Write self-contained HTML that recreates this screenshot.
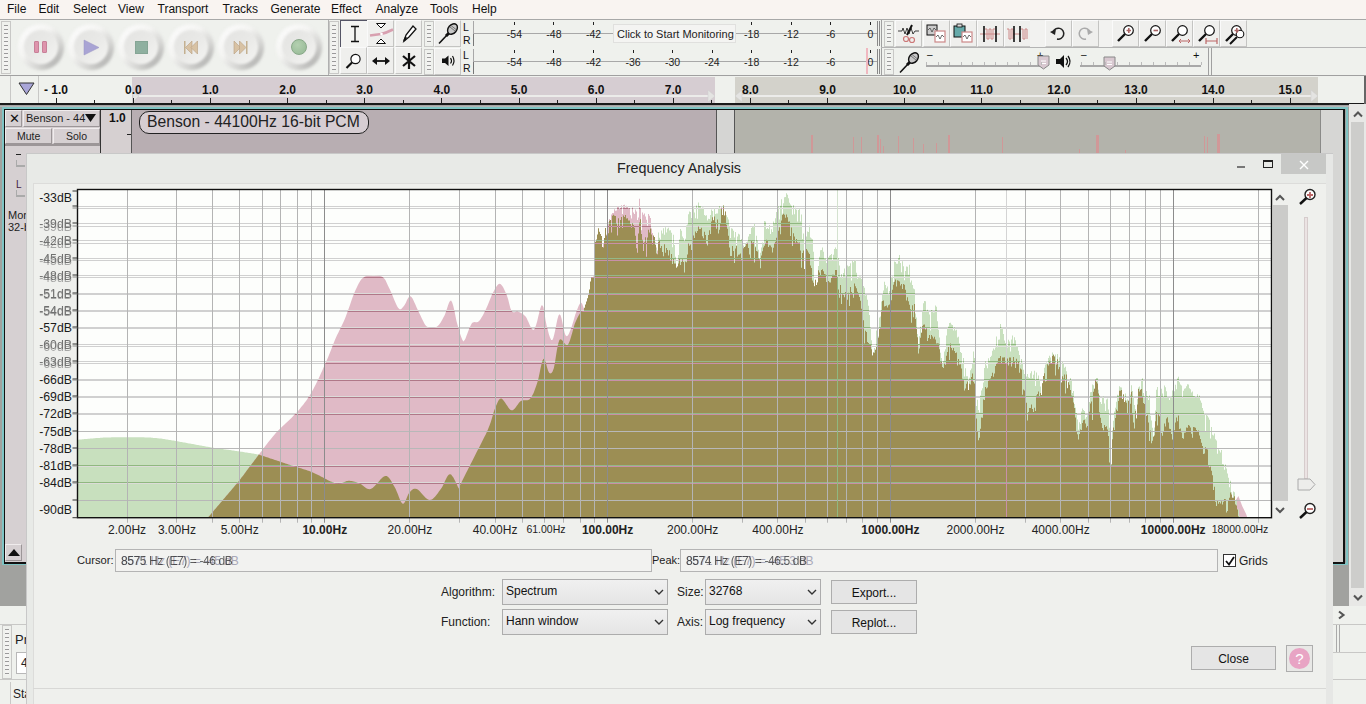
<!DOCTYPE html>
<html><head><meta charset="utf-8"><title>Audacity</title>
<style>
*{box-sizing:border-box;margin:0;padding:0}
html,body{width:1366px;height:704px;overflow:hidden;background:#eff1ed;font-family:"Liberation Sans",sans-serif;font-size:12px;color:#111}
.a{position:absolute}
.t{position:absolute;white-space:nowrap;line-height:1}
.grip{position:absolute;width:10px;background:repeating-linear-gradient(to bottom,#f4f4f2 0,#f4f4f2 3px,#9a9a9a 3px,#9a9a9a 4px);border:1px solid #c8c8c6;background-clip:content-box;padding:3px 2px}
.btn{position:absolute;background:#efefed;border:1px solid #fafafa;border-right-color:#c4c4c2;border-bottom-color:#c4c4c2}
svg{position:absolute;overflow:visible}
</style></head><body>

<div class="a" style="left:0;top:0;width:1366px;height:19px;background:#f9f4f1"></div>
<div class="t" style="left:7px;top:3px;font-size:12px;color:#111">File</div>
<div class="t" style="left:38.5px;top:3px;font-size:12px;color:#111">Edit</div>
<div class="t" style="left:73px;top:3px;font-size:12px;color:#111">Select</div>
<div class="t" style="left:118px;top:3px;font-size:12px;color:#111">View</div>
<div class="t" style="left:157.5px;top:3px;font-size:12px;color:#111">Transport</div>
<div class="t" style="left:222.5px;top:3px;font-size:12px;color:#111">Tracks</div>
<div class="t" style="left:270.5px;top:3px;font-size:12px;color:#111">Generate</div>
<div class="t" style="left:331px;top:3px;font-size:12px;color:#111">Effect</div>
<div class="t" style="left:375.5px;top:3px;font-size:12px;color:#111">Analyze</div>
<div class="t" style="left:430px;top:3px;font-size:12px;color:#111">Tools</div>
<div class="t" style="left:472px;top:3px;font-size:12px;color:#111">Help</div>
<div class="a" style="left:0;top:19px;width:1366px;height:57px;background:#eff1ed;border-top:1px solid #a8a8a8"></div>
<div class="a" style="left:0;top:75px;width:1366px;height:1px;background:#a0a0a0"></div>
<div class="a" style="left:0;top:20px;width:329px;height:55px;border-right:1px solid #b0b0b0;background:#eff1ed"></div>
<div class="grip" style="left:1px;top:21px;height:53px"></div>
<div class="a" style="left:18px;top:24px;width:46px;height:46px;border-radius:50%;background:linear-gradient(135deg,#fcfcfc 5%,#f4f4f2 40%,#d4d4d2 68%,#a6a6a4 92%);filter:blur(1.4px)"></div>
<div class="a" style="left:24px;top:30px;width:34px;height:34px;border-radius:50%;background:linear-gradient(135deg,#e3e3e1 0%,#e9e9e7 50%,#f5f5f3 100%);filter:blur(0.8px)"></div>
<div class="a" style="left:34px;top:41px;width:5px;height:12px;background:#de94ac;border-radius:1px;border:1px solid #c88098"></div><div class="a" style="left:42px;top:41px;width:5px;height:12px;background:#de94ac;border-radius:1px;border:1px solid #c88098"></div>
<div class="a" style="left:68px;top:24px;width:46px;height:46px;border-radius:50%;background:linear-gradient(135deg,#fcfcfc 5%,#f4f4f2 40%,#d4d4d2 68%,#a6a6a4 92%);filter:blur(1.4px)"></div>
<div class="a" style="left:74px;top:30px;width:34px;height:34px;border-radius:50%;background:linear-gradient(135deg,#e3e3e1 0%,#e9e9e7 50%,#f5f5f3 100%);filter:blur(0.8px)"></div>
<svg style="left:84px;top:40px" width="16" height="16"><polygon points="0,0 15,7.5 0,15" fill="#a9a4d4" stroke="#9a95c4" stroke-width="0.5"/></svg>
<div class="a" style="left:118px;top:24px;width:46px;height:46px;border-radius:50%;background:linear-gradient(135deg,#fcfcfc 5%,#f4f4f2 40%,#d4d4d2 68%,#a6a6a4 92%);filter:blur(1.4px)"></div>
<div class="a" style="left:124px;top:30px;width:34px;height:34px;border-radius:50%;background:linear-gradient(135deg,#e3e3e1 0%,#e9e9e7 50%,#f5f5f3 100%);filter:blur(0.8px)"></div>
<div class="a" style="left:135px;top:41px;width:13px;height:13px;background:#8fb0a0;border:1px solid #85a595"></div>
<div class="a" style="left:168px;top:24px;width:46px;height:46px;border-radius:50%;background:linear-gradient(135deg,#fcfcfc 5%,#f4f4f2 40%,#d4d4d2 68%,#a6a6a4 92%);filter:blur(1.4px)"></div>
<div class="a" style="left:174px;top:30px;width:34px;height:34px;border-radius:50%;background:linear-gradient(135deg,#e3e3e1 0%,#e9e9e7 50%,#f5f5f3 100%);filter:blur(0.8px)"></div>
<svg style="left:184px;top:40px" width="16" height="16"><rect x="0" y="1" width="1.5" height="13" fill="#c4b090"/><polygon points="1.5,7.5 8,1 8,14" fill="#d8c2a4" stroke="#b8a080" stroke-width="0.6"/><polygon points="7,7.5 13.5,1 13.5,14" fill="#d8c2a4" stroke="#b8a080" stroke-width="0.6"/></svg>
<div class="a" style="left:218px;top:24px;width:46px;height:46px;border-radius:50%;background:linear-gradient(135deg,#fcfcfc 5%,#f4f4f2 40%,#d4d4d2 68%,#a6a6a4 92%);filter:blur(1.4px)"></div>
<div class="a" style="left:224px;top:30px;width:34px;height:34px;border-radius:50%;background:linear-gradient(135deg,#e3e3e1 0%,#e9e9e7 50%,#f5f5f3 100%);filter:blur(0.8px)"></div>
<svg style="left:234px;top:40px" width="16" height="16"><polygon points="0,1 6.5,7.5 0,14" fill="#d8c2a4" stroke="#b8a080" stroke-width="0.6"/><polygon points="5.5,1 12,7.5 5.5,14" fill="#d8c2a4" stroke="#b8a080" stroke-width="0.6"/><rect x="12" y="1" width="1.5" height="13" fill="#c4b090"/></svg>
<div class="a" style="left:276px;top:24px;width:46px;height:46px;border-radius:50%;background:linear-gradient(135deg,#fcfcfc 5%,#f4f4f2 40%,#d4d4d2 68%,#a6a6a4 92%);filter:blur(1.4px)"></div>
<div class="a" style="left:282px;top:30px;width:34px;height:34px;border-radius:50%;background:linear-gradient(135deg,#e3e3e1 0%,#e9e9e7 50%,#f5f5f3 100%);filter:blur(0.8px)"></div>
<div class="a" style="left:291px;top:39px;width:16px;height:16px;border-radius:50%;background:radial-gradient(circle at 40% 35%,#b4d0b0,#94b894);border:1px solid #88a888"></div>
<div class="grip" style="left:329px;top:21px;height:53px"></div>
<div class="btn" style="left:340px;top:20px;width:27px;height:27px"></div>
<div class="btn" style="left:367px;top:20px;width:27px;height:27px"></div>
<div class="btn" style="left:395px;top:20px;width:27px;height:27px"></div>
<div class="btn" style="left:340px;top:47px;width:27px;height:27px"></div>
<div class="btn" style="left:367px;top:47px;width:27px;height:27px"></div>
<div class="btn" style="left:395px;top:47px;width:27px;height:27px"></div>
<div class="a" style="left:340px;top:20px;width:27px;height:27px;border-left:1px solid #556;border-top:1px solid #556;background:#f4f4f2"></div>
<svg style="left:346px;top:24px" width="16" height="20"><path d="M5,2.5 H13 M9,2.5 V17.5 M5,17.5 H13" stroke="#111" stroke-width="1.3" fill="none"/></svg>
<svg style="left:369px;top:22px" width="24" height="24"><polygon points="7.5,1.5 16.5,1.5 12,6" fill="#fff" stroke="#111" stroke-width="1"/><polygon points="7.5,21.5 16.5,21.5 12,17" fill="#fff" stroke="#111" stroke-width="1"/><path d="M1,13.5 L12,12 Q17,11 24,7.5" stroke="#d8a0b0" stroke-width="2.6" fill="none"/><circle cx="12.5" cy="12" r="1.3" fill="#fff"/></svg>
<svg style="left:399px;top:24px" width="20" height="20"><path d="M5,17 L7,11 L14,2 L17,5 L10,13 Z" fill="#fff" stroke="#111" stroke-width="1.3"/><path d="M5,17 L7,13" stroke="#111" stroke-width="2"/></svg>
<svg style="left:344px;top:51px" width="20" height="20"><circle cx="11.5" cy="8" r="4.6" fill="#fff" stroke="#111" stroke-width="1.2"/><path d="M8,11.5 L2.5,17" stroke="#111" stroke-width="2.2"/></svg>
<svg style="left:371px;top:53px" width="20" height="16"><path d="M3,8 H17" stroke="#111" stroke-width="1.8"/><polygon points="1,8 6,4 6,12" fill="#111"/><polygon points="19,8 14,4 14,12" fill="#111"/></svg>
<svg style="left:401px;top:51px" width="16" height="20"><path d="M8,2 V18 M2,5 L14,15 M14,5 L2,15" stroke="#111" stroke-width="2.2"/></svg>
<div class="grip" style="left:424px;top:21px;height:26px"></div>
<div class="btn" style="left:434px;top:20px;width:27px;height:27px"></div>
<div class="t" style="left:463px;top:22px;font-size:10.5px">L</div><div class="t" style="left:463px;top:35px;font-size:10.5px">R</div>
<div class="a" style="left:473px;top:21px;width:405px;height:25px;border-left:1px solid #a8a8a8"></div>
<div class="a" style="left:474px;top:33px;width:404px;height:1px;background:#a8a8a8"></div>
<div class="a" style="left:473px;top:34px;width:1px;height:12px;background:#777"></div>
<div class="a" style="left:877px;top:21px;width:1px;height:25px;background:#888"></div><div class="a" style="left:879px;top:21px;width:1px;height:25px;background:#888"></div>
<div class="a" style="left:513.9px;top:22px;width:1px;height:3px;background:#222"></div>
<div class="t" style="left:494.4px;width:40px;text-align:center;top:29px;font-size:10.5px;color:#222">-54</div>
<div class="a" style="left:553.4px;top:22px;width:1px;height:3px;background:#222"></div>
<div class="t" style="left:533.9px;width:40px;text-align:center;top:29px;font-size:10.5px;color:#222">-48</div>
<div class="a" style="left:593.0px;top:22px;width:1px;height:3px;background:#222"></div>
<div class="t" style="left:573.5px;width:40px;text-align:center;top:29px;font-size:10.5px;color:#222">-42</div>
<div class="a" style="left:751.2px;top:22px;width:1px;height:3px;background:#222"></div>
<div class="t" style="left:731.7px;width:40px;text-align:center;top:29px;font-size:10.5px;color:#222">-18</div>
<div class="a" style="left:790.8px;top:22px;width:1px;height:3px;background:#222"></div>
<div class="t" style="left:771.2px;width:40px;text-align:center;top:29px;font-size:10.5px;color:#222">-12</div>
<div class="a" style="left:830.3px;top:22px;width:1px;height:3px;background:#222"></div>
<div class="t" style="left:810.8px;width:40px;text-align:center;top:29px;font-size:10.5px;color:#222">-6</div>
<div class="a" style="left:869.8px;top:22px;width:1px;height:3px;background:#222"></div>
<div class="t" style="left:850.3px;width:40px;text-align:center;top:29px;font-size:10.5px;color:#222">0</div>
<div class="grip" style="left:424px;top:49px;height:26px"></div>
<div class="btn" style="left:434px;top:48px;width:27px;height:27px"></div>
<div class="t" style="left:463px;top:50px;font-size:10.5px">L</div><div class="t" style="left:463px;top:63px;font-size:10.5px">R</div>
<div class="a" style="left:473px;top:49px;width:405px;height:25px;border-left:1px solid #a8a8a8"></div>
<div class="a" style="left:474px;top:61px;width:404px;height:1px;background:#a8a8a8"></div>
<div class="a" style="left:473px;top:62px;width:1px;height:12px;background:#777"></div>
<div class="a" style="left:877px;top:49px;width:1px;height:25px;background:#888"></div><div class="a" style="left:879px;top:49px;width:1px;height:25px;background:#888"></div>
<div class="a" style="left:513.9px;top:50px;width:1px;height:3px;background:#222"></div>
<div class="t" style="left:494.4px;width:40px;text-align:center;top:57px;font-size:10.5px;color:#222">-54</div>
<div class="a" style="left:553.4px;top:50px;width:1px;height:3px;background:#222"></div>
<div class="t" style="left:533.9px;width:40px;text-align:center;top:57px;font-size:10.5px;color:#222">-48</div>
<div class="a" style="left:593.0px;top:50px;width:1px;height:3px;background:#222"></div>
<div class="t" style="left:573.5px;width:40px;text-align:center;top:57px;font-size:10.5px;color:#222">-42</div>
<div class="a" style="left:632.5px;top:50px;width:1px;height:3px;background:#222"></div>
<div class="t" style="left:613.0px;width:40px;text-align:center;top:57px;font-size:10.5px;color:#222">-36</div>
<div class="a" style="left:672.1px;top:50px;width:1px;height:3px;background:#222"></div>
<div class="t" style="left:652.6px;width:40px;text-align:center;top:57px;font-size:10.5px;color:#222">-30</div>
<div class="a" style="left:711.6px;top:50px;width:1px;height:3px;background:#222"></div>
<div class="t" style="left:692.1px;width:40px;text-align:center;top:57px;font-size:10.5px;color:#222">-24</div>
<div class="a" style="left:751.2px;top:50px;width:1px;height:3px;background:#222"></div>
<div class="t" style="left:731.7px;width:40px;text-align:center;top:57px;font-size:10.5px;color:#222">-18</div>
<div class="a" style="left:790.8px;top:50px;width:1px;height:3px;background:#222"></div>
<div class="t" style="left:771.2px;width:40px;text-align:center;top:57px;font-size:10.5px;color:#222">-12</div>
<div class="a" style="left:830.3px;top:50px;width:1px;height:3px;background:#222"></div>
<div class="t" style="left:810.8px;width:40px;text-align:center;top:57px;font-size:10.5px;color:#222">-6</div>
<div class="a" style="left:869.8px;top:50px;width:1px;height:3px;background:#222"></div>
<div class="t" style="left:850.3px;width:40px;text-align:center;top:57px;font-size:10.5px;color:#222">0</div>
<div class="a" style="left:613px;top:24px;width:123px;height:19px;background:#f4f4f2;border:1px solid #e0e0de"></div>
<div class="t" style="left:617px;top:29px;font-size:11px;color:#222">Click to Start Monitoring</div>
<div class="a" style="left:866px;top:48px;width:2px;height:26px;background:#f0b8c0"></div>
<svg style="left:437px;top:22px" width="22" height="24"><path d="M2,21.5 L11,12" stroke="#111" stroke-width="1.6"/><path d="M9,14 L13,10" stroke="#111" stroke-width="3"/><ellipse cx="15.5" cy="7" rx="4.2" ry="5.8" transform="rotate(40 15.5 7)" fill="#c8c8c8" stroke="#111" stroke-width="1.4"/><path d="M13,5 L18,9 M14,3.5 L19,7.5" stroke="#555" stroke-width="0.7"/></svg>
<svg style="left:441px;top:53px" width="16" height="16"><polygon points="1,5.5 4,5.5 7.5,2.5 7.5,13 4,10 1,10" fill="#111"/><path d="M9.5,5 Q11.5,7.8 9.5,10.5 M11.5,3 Q14.5,7.8 11.5,12.5" stroke="#111" stroke-width="1.2" fill="none"/></svg>
<div class="a" style="left:881px;top:20px;width:1px;height:55px;background:#a0a0a0"></div>
<div class="grip" style="left:884px;top:21px;height:26px"></div>
<div class="btn" style="left:895px;top:20px;width:27px;height:27px"></div>
<div class="btn" style="left:923px;top:20px;width:27px;height:27px"></div>
<div class="btn" style="left:950px;top:20px;width:27px;height:27px"></div>
<div class="btn" style="left:977px;top:20px;width:27px;height:27px"></div>
<div class="btn" style="left:1004px;top:20px;width:27px;height:27px"></div>
<div class="btn" style="left:1045px;top:20px;width:27px;height:27px"></div>
<div class="btn" style="left:1072px;top:20px;width:27px;height:27px"></div>
<div class="btn" style="left:1112px;top:20px;width:27px;height:27px"></div>
<div class="btn" style="left:1139px;top:20px;width:27px;height:27px"></div>
<div class="btn" style="left:1166px;top:20px;width:27px;height:27px"></div>
<div class="btn" style="left:1193px;top:20px;width:27px;height:27px"></div>
<div class="btn" style="left:1220px;top:20px;width:27px;height:27px"></div>
<div class="a" style="left:1030px;top:20px;width:15px;height:27px;background:#f2f2f0"></div>
<div class="a" style="left:1099px;top:20px;width:13px;height:27px;background:#f2f2f0"></div>
<div class="a" style="left:1248px;top:20px;width:118px;height:27px;background:#eff1ed"></div>
<svg style="left:897px;top:22px" width="24" height="24"><path d="M1,9 L5,9 L6,6 L8,12 L10,6 L12,12 L14,6 L16,12 L18,9 L22,9" stroke="#111" stroke-width="0.8" fill="none"/><path d="M15,3 L10,13" stroke="#111" stroke-width="2"/><circle cx="9" cy="17" r="2.5" fill="none" stroke="#c77" stroke-width="1.2"/><circle cx="15" cy="18" r="2.5" fill="none" stroke="#c77" stroke-width="1.2"/></svg>
<svg style="left:926px;top:24px" width="22" height="22"><rect x="1" y="1" width="10" height="10" fill="#ccc" stroke="#111"/><path d="M2,6 L4,4 L6,8 L8,4 L10,6" stroke="#333" stroke-width="0.7" fill="none"/><rect x="9" y="7" width="10" height="11" fill="#fff" stroke="#c88" stroke-width="1.2"/><path d="M10,13 L12,11 L14,15 L16,11 L18,13" stroke="#333" stroke-width="0.7" fill="none"/></svg>
<svg style="left:953px;top:23px" width="22" height="22"><rect x="1" y="3" width="11" height="11" fill="#6aa" stroke="#111"/><rect x="4" y="1" width="5" height="3" fill="#ddd" stroke="#111" stroke-width="0.8"/><rect x="9" y="9" width="10" height="10" fill="#fff" stroke="#c88" stroke-width="1.2"/><path d="M10,14 L12,12 L14,16 L16,12 L18,14" stroke="#333" stroke-width="0.7" fill="none"/></svg>
<svg style="left:979px;top:23px" width="22" height="22"><path d="M1,11 H21" stroke="#c88" stroke-width="1"/><path d="M6,6 H8 V16 H10 V6 H12 V16 H14 V6 H16" stroke="#c88" stroke-width="1" fill="none"/><path d="M5,3 V19 M17,3 V19" stroke="#111" stroke-width="1.6"/></svg>
<svg style="left:1006px;top:23px" width="22" height="22"><path d="M1,6 H3 V16 H5 V6 H7 V16" stroke="#c88" stroke-width="1" fill="none"/><path d="M15,6 H17 V16 H19 V6 H21 V16" stroke="#c88" stroke-width="1" fill="none"/><path d="M7,11 H15" stroke="#c88"/><path d="M8,3 V19 M14,3 V19" stroke="#111" stroke-width="1.6"/></svg>
<svg style="left:1049px;top:25px" width="18" height="18"><path d="M4,7 A5.5,5.5 0 1 1 8,14" stroke="#222" stroke-width="1.5" fill="none"/><polygon points="1,7 7,4 6,10" fill="#222"/></svg>
<svg style="left:1076px;top:25px" width="18" height="18"><path d="M14,7 A5.5,5.5 0 1 0 10,14" stroke="#aaa" stroke-width="1.5" fill="none"/><polygon points="17,7 11,4 12,10" fill="#aaa"/></svg>
<svg style="left:1114px;top:23px" width="24" height="22"><circle cx="14.5" cy="7.5" r="4.8" fill="#fff" stroke="#111" stroke-width="1.2"/><path d="M11,11 L4,18" stroke="#111" stroke-width="2.4"/><path d="M12.5,7.5 H17 M14.8,5 V10" stroke="#a66" stroke-width="1.6"/></svg>
<svg style="left:1141px;top:23px" width="24" height="22"><circle cx="14.5" cy="7.5" r="4.8" fill="#fff" stroke="#111" stroke-width="1.2"/><path d="M11,11 L4,18" stroke="#111" stroke-width="2.4"/><path d="M12.5,7.5 H17" stroke="#a66" stroke-width="1.6"/></svg>
<svg style="left:1168px;top:23px" width="24" height="22"><circle cx="14.5" cy="7.5" r="4.8" fill="#fff" stroke="#111" stroke-width="1.2"/><path d="M11,11 L4,18" stroke="#111" stroke-width="2.4"/><path d="M11,18 H22 M11,18 l2,-2 M11,18 l2,2 M22,18 l-2,-2 M22,18 l-2,2" stroke="#b66" stroke-width="1"/></svg>
<svg style="left:1195px;top:23px" width="24" height="22"><circle cx="14.5" cy="7.5" r="4.8" fill="#fff" stroke="#111" stroke-width="1.2"/><path d="M11,11 L4,18" stroke="#111" stroke-width="2.4"/><path d="M11,18 H22 M11,15 V21 M22,15 V21" stroke="#b66" stroke-width="1.2"/></svg>
<svg style="left:1222px;top:23px" width="24" height="22"><circle cx="14.5" cy="7.5" r="4.8" fill="#fff" stroke="#111" stroke-width="1.2"/><path d="M11,11 L4,18" stroke="#111" stroke-width="2.4"/><circle cx="18" cy="11" r="3.8" fill="#fff" stroke="#111" stroke-width="1.1"/><path d="M15,14 L8,21" stroke="#111" stroke-width="2"/><path d="M12.5,7.5 H17 M14.8,5 V10" stroke="#a66" stroke-width="1.6"/></svg>
<div class="grip" style="left:884px;top:49px;height:26px"></div>
<svg style="left:898px;top:51px" width="22" height="24"><path d="M2,21.5 L11,12" stroke="#111" stroke-width="1.6"/><path d="M9,14 L13,10" stroke="#111" stroke-width="3"/><ellipse cx="15.5" cy="7" rx="4.2" ry="5.8" transform="rotate(40 15.5 7)" fill="#c8c8c8" stroke="#111" stroke-width="1.4"/><path d="M13,5 L18,9 M14,3.5 L19,7.5" stroke="#555" stroke-width="0.7"/></svg>
<div class="a" style="left:926px;top:65px;width:115px;height:2px;background:#a8a8a8"></div>
<div class="t" style="left:927px;top:50px;font-size:10px">–</div><div class="t" style="left:1037px;top:50px;font-size:11px">+</div>
<svg style="left:1037px;top:55px" width="14" height="16"><polygon points="1,1 12,1 12,10 6.5,14 1,10" fill="#d8c8d0" stroke="#888" stroke-width="1"/><path d="M4,6 H9 M4,8.5 H9" stroke="#fff"/></svg>
<svg style="left:1055px;top:53px" width="18" height="18"><polygon points="1,6 5,6 9,2 9,15 5,11 1,11" fill="#111"/><path d="M11,5 Q14,8.5 11,12 M13,3 Q17,8.5 13,14" stroke="#111" stroke-width="1.3" fill="none"/></svg>
<div class="a" style="left:1080px;top:65px;width:121px;height:2px;background:#a8a8a8"></div>
<div class="t" style="left:1081px;top:50px;font-size:10px">–</div><div class="t" style="left:1193px;top:50px;font-size:11px">+</div>
<svg style="left:1103px;top:56px" width="14" height="16"><polygon points="1,1 12,1 12,10 6.5,14 1,10" fill="#d8c8d0" stroke="#888" stroke-width="1"/><path d="M4,6 H9 M4,8.5 H9" stroke="#fff"/></svg>
<div class="a" style="left:1208px;top:48px;width:1px;height:27px;background:#a0a0a0"></div><div class="a" style="left:1211px;top:48px;width:1px;height:27px;background:#a0a0a0"></div>
<div class="a" style="left:881px;top:47px;width:485px;height:1px;background:#b4b4b4"></div>
<div class="a" style="left:926.0px;top:62px;width:1px;height:3px;background:#bbb"></div><div class="a" style="left:937.5px;top:62px;width:1px;height:3px;background:#bbb"></div><div class="a" style="left:949.0px;top:62px;width:1px;height:3px;background:#bbb"></div><div class="a" style="left:960.5px;top:62px;width:1px;height:3px;background:#bbb"></div><div class="a" style="left:972.0px;top:62px;width:1px;height:3px;background:#bbb"></div><div class="a" style="left:983.5px;top:62px;width:1px;height:3px;background:#bbb"></div><div class="a" style="left:995.0px;top:62px;width:1px;height:3px;background:#bbb"></div><div class="a" style="left:1006.5px;top:62px;width:1px;height:3px;background:#bbb"></div><div class="a" style="left:1018.0px;top:62px;width:1px;height:3px;background:#bbb"></div><div class="a" style="left:1029.5px;top:62px;width:1px;height:3px;background:#bbb"></div><div class="a" style="left:1041.0px;top:62px;width:1px;height:3px;background:#bbb"></div>
<div class="a" style="left:1081.0px;top:62px;width:1px;height:3px;background:#bbb"></div><div class="a" style="left:1093.0px;top:62px;width:1px;height:3px;background:#bbb"></div><div class="a" style="left:1105.0px;top:62px;width:1px;height:3px;background:#bbb"></div><div class="a" style="left:1117.0px;top:62px;width:1px;height:3px;background:#bbb"></div><div class="a" style="left:1129.0px;top:62px;width:1px;height:3px;background:#bbb"></div><div class="a" style="left:1141.0px;top:62px;width:1px;height:3px;background:#bbb"></div><div class="a" style="left:1153.0px;top:62px;width:1px;height:3px;background:#bbb"></div><div class="a" style="left:1165.0px;top:62px;width:1px;height:3px;background:#bbb"></div><div class="a" style="left:1177.0px;top:62px;width:1px;height:3px;background:#bbb"></div><div class="a" style="left:1189.0px;top:62px;width:1px;height:3px;background:#bbb"></div><div class="a" style="left:1201.0px;top:62px;width:1px;height:3px;background:#bbb"></div>
<div class="a" style="left:0;top:76px;width:1366px;height:28px;background:#eff1ed"></div>
<div class="a" style="left:10px;top:76px;width:1px;height:28px;background:#c8c8c6"></div>
<div class="a" style="left:38px;top:76px;width:1px;height:28px;background:#c8c8c6"></div>
<svg style="left:18px;top:82px" width="18" height="14"><polygon points="1,1 16,1 8.5,12.5" fill="#a9a6d8" stroke="#333" stroke-width="1"/></svg>
<div class="a" style="left:132px;top:77px;width:583px;height:26px;background:#d6cdd2"></div>
<div class="a" style="left:735px;top:77px;width:583px;height:26px;background:#d3d2cb"></div>
<div class="a" style="left:136px;top:95px;width:575px;height:2px;background:#ececea"></div>
<div class="a" style="left:739px;top:95px;width:575px;height:2px;background:#ececea"></div>
<svg style="left:0;top:0" width="1366" height="110"><polygon points="708,90 715,96 708,102" fill="#e4e4e2" stroke="#ccc" stroke-width="0.5"/><polygon points="742,90 735,96 742,102" fill="#e4e4e2" stroke="#ccc" stroke-width="0.5"/><polygon points="1311,90 1318,96 1311,102" fill="#e4e4e2" stroke="#ccc" stroke-width="0.5"/><polygon points="133,92 139,96 133,102" fill="#e4e4e2" stroke="#ccc" stroke-width="0.5"/></svg>
<div class="t" style="left:44px;top:84px;font-size:12px;font-weight:bold;color:#111">- 1.0</div>
<div class="a" style="left:55.7px;top:98px;width:1px;height:5px;background:#222"></div><div class="a" style="left:94.2px;top:100px;width:1px;height:3px;background:#222"></div><div class="a" style="left:132.8px;top:98px;width:1px;height:5px;background:#222"></div><div class="t" style="left:108.3px;width:50px;text-align:center;top:84px;font-size:12px;font-weight:bold;color:#111">0.0</div><div class="a" style="left:171.4px;top:100px;width:1px;height:3px;background:#222"></div><div class="a" style="left:209.9px;top:98px;width:1px;height:5px;background:#222"></div><div class="t" style="left:185.4px;width:50px;text-align:center;top:84px;font-size:12px;font-weight:bold;color:#111">1.0</div><div class="a" style="left:248.5px;top:100px;width:1px;height:3px;background:#222"></div><div class="a" style="left:287.1px;top:98px;width:1px;height:5px;background:#222"></div><div class="t" style="left:262.6px;width:50px;text-align:center;top:84px;font-size:12px;font-weight:bold;color:#111">2.0</div><div class="a" style="left:325.6px;top:100px;width:1px;height:3px;background:#222"></div><div class="a" style="left:364.2px;top:98px;width:1px;height:5px;background:#222"></div><div class="t" style="left:339.7px;width:50px;text-align:center;top:84px;font-size:12px;font-weight:bold;color:#111">3.0</div><div class="a" style="left:402.8px;top:100px;width:1px;height:3px;background:#222"></div><div class="a" style="left:441.3px;top:98px;width:1px;height:5px;background:#222"></div><div class="t" style="left:416.8px;width:50px;text-align:center;top:84px;font-size:12px;font-weight:bold;color:#111">4.0</div><div class="a" style="left:479.9px;top:100px;width:1px;height:3px;background:#222"></div><div class="a" style="left:518.5px;top:98px;width:1px;height:5px;background:#222"></div><div class="t" style="left:494.0px;width:50px;text-align:center;top:84px;font-size:12px;font-weight:bold;color:#111">5.0</div><div class="a" style="left:557.0px;top:100px;width:1px;height:3px;background:#222"></div><div class="a" style="left:595.6px;top:98px;width:1px;height:5px;background:#222"></div><div class="t" style="left:571.1px;width:50px;text-align:center;top:84px;font-size:12px;font-weight:bold;color:#111">6.0</div><div class="a" style="left:634.1px;top:100px;width:1px;height:3px;background:#222"></div><div class="a" style="left:672.7px;top:98px;width:1px;height:5px;background:#222"></div><div class="t" style="left:648.2px;width:50px;text-align:center;top:84px;font-size:12px;font-weight:bold;color:#111">7.0</div><div class="a" style="left:711.3px;top:100px;width:1px;height:3px;background:#222"></div><div class="a" style="left:749.8px;top:98px;width:1px;height:5px;background:#222"></div><div class="t" style="left:725.3px;width:50px;text-align:center;top:84px;font-size:12px;font-weight:bold;color:#111">8.0</div><div class="a" style="left:788.4px;top:100px;width:1px;height:3px;background:#222"></div><div class="a" style="left:827.0px;top:98px;width:1px;height:5px;background:#222"></div><div class="t" style="left:802.5px;width:50px;text-align:center;top:84px;font-size:12px;font-weight:bold;color:#111">9.0</div><div class="a" style="left:865.5px;top:100px;width:1px;height:3px;background:#222"></div><div class="a" style="left:904.1px;top:98px;width:1px;height:5px;background:#222"></div><div class="t" style="left:879.6px;width:50px;text-align:center;top:84px;font-size:12px;font-weight:bold;color:#111">10.0</div><div class="a" style="left:942.7px;top:100px;width:1px;height:3px;background:#222"></div><div class="a" style="left:981.2px;top:98px;width:1px;height:5px;background:#222"></div><div class="t" style="left:956.7px;width:50px;text-align:center;top:84px;font-size:12px;font-weight:bold;color:#111">11.0</div><div class="a" style="left:1019.8px;top:100px;width:1px;height:3px;background:#222"></div><div class="a" style="left:1058.4px;top:98px;width:1px;height:5px;background:#222"></div><div class="t" style="left:1033.9px;width:50px;text-align:center;top:84px;font-size:12px;font-weight:bold;color:#111">12.0</div><div class="a" style="left:1096.9px;top:100px;width:1px;height:3px;background:#222"></div><div class="a" style="left:1135.5px;top:98px;width:1px;height:5px;background:#222"></div><div class="t" style="left:1111.0px;width:50px;text-align:center;top:84px;font-size:12px;font-weight:bold;color:#111">13.0</div><div class="a" style="left:1174.1px;top:100px;width:1px;height:3px;background:#222"></div><div class="a" style="left:1212.6px;top:98px;width:1px;height:5px;background:#222"></div><div class="t" style="left:1188.1px;width:50px;text-align:center;top:84px;font-size:12px;font-weight:bold;color:#111">14.0</div><div class="a" style="left:1251.2px;top:100px;width:1px;height:3px;background:#222"></div><div class="a" style="left:1289.7px;top:98px;width:1px;height:5px;background:#222"></div><div class="t" style="left:1265.2px;width:50px;text-align:center;top:84px;font-size:12px;font-weight:bold;color:#111">15.0</div>
<div class="a" style="left:0;top:103px;width:1366px;height:2px;background:#1a1a1a"></div>
<div class="a" style="left:1364px;top:76px;width:2px;height:28px;background:#666"></div>
<div class="a" style="left:0;top:105px;width:1349px;height:2px;background:linear-gradient(#9a9a9a,#c0c0c0)"></div>
<div class="a" style="left:0;top:107px;width:1349px;height:500px;background:#a1a29f"></div>
<div class="a" style="left:2px;top:107px;width:1346px;height:458px;border:2px solid #7fc4c4"></div>
<div class="a" style="left:4px;top:109px;width:1341px;height:455px;border:1px solid #111;border-right-width:2px;border-bottom-width:2px;background:#d4d4d2"></div>
<div class="a" style="left:5px;top:110px;width:95px;height:452px;background:#d6d0d2"></div>
<div class="a" style="left:5px;top:110px;width:17px;height:17px;border:1px solid #f0eced;border-right-color:#9c9698;border-bottom-color:#9c9698"></div>
<div class="t" style="left:9px;top:112px;font-size:13px;color:#111">✕</div>
<div class="a" style="left:23px;top:110px;width:77px;height:17px;border:1px solid #f0eced;border-right-color:#9c9698;border-bottom-color:#9c9698"></div>
<div class="t" style="left:26px;top:113px;font-size:11px;color:#222">Benson - 44</div>
<svg style="left:85px;top:114px" width="12" height="10"><polygon points="0,0 11,0 5.5,8" fill="#111"/></svg>
<div class="a" style="left:5px;top:128px;width:47px;height:16px;border:1px solid #f0eced;border-right-color:#9c9698;border-bottom-color:#9c9698"></div>
<div class="a" style="left:53px;top:128px;width:47px;height:16px;border:1px solid #f0eced;border-right-color:#9c9698;border-bottom-color:#9c9698"></div>
<div class="t" style="left:17px;top:131px;font-size:10.5px;color:#222">Mute</div>
<div class="t" style="left:66px;top:131px;font-size:10.5px;color:#222">Solo</div>
<div class="a" style="left:5px;top:144px;width:95px;height:2px;background:#9c9698"></div>
<div class="t" style="left:8px;top:209px;font-size:11px;color:#222;line-height:12px">Mono, 44100Hz<br>32-bit float</div>
<div class="t" style="left:16px;top:180px;font-size:10px;color:#424">L</div>
<div class="a" style="left:16px;top:154px;width:5px;height:1px;background:#222"></div>
<div class="a" style="left:16px;top:160px;width:9px;height:7px;border-left:1px solid #aaa;border-bottom:2px solid #aaa"></div>
<div class="a" style="left:16px;top:190px;width:9px;height:7px;border-left:1px solid #aaa;border-bottom:2px solid #aaa"></div>
<div class="a" style="left:5px;top:544px;width:17px;height:17px;border:1px solid #f0eced;border-right-color:#9c9698;border-bottom-color:#9c9698"></div>
<svg style="left:7px;top:548px" width="14" height="10"><polygon points="1,8 13,8 7,1" fill="#111"/></svg>
<div class="a" style="left:100px;top:110px;width:31px;height:452px;background:#d6d0d1;border-left:1px solid #333"></div>
<div class="t" style="left:109px;top:112px;font-size:12px;font-weight:bold;color:#111">1.0</div>
<div class="a" style="left:127px;top:134px;width:4px;height:1px;background:#222"></div>
<div class="a" style="left:131px;top:110px;width:585px;height:452px;background:#b8aeb2;border-left:1px solid #555"></div>
<div class="a" style="left:716px;top:110px;width:1px;height:452px;background:#555"></div>
<div class="a" style="left:717px;top:110px;width:17px;height:452px;background:#d5d5d3"></div>
<div class="a" style="left:734px;top:110px;width:1px;height:452px;background:#555"></div>
<div class="a" style="left:735px;top:110px;width:585px;height:452px;background:#b3b3ab"></div>
<div class="a" style="left:1320px;top:110px;width:23px;height:452px;background:#d6d6d4;border-left:1px solid #8a8a88"></div>
<div class="a" style="left:139px;top:111px;width:230px;height:23px;border:1px solid #222;border-radius:10px;background:#d6cdd2"></div>
<div class="t" style="left:147px;top:114px;font-size:15.7px;color:#222">Benson - 44100Hz 16-bit PCM</div>
<div class="a" style="left:811px;top:135px;width:2px;height:19px;background:#d09898"></div><div class="a" style="left:853px;top:137px;width:1px;height:17px;background:#d09898"></div><div class="a" style="left:861px;top:137px;width:1px;height:17px;background:#d09898"></div><div class="a" style="left:877px;top:135px;width:2px;height:19px;background:#d09898"></div><div class="a" style="left:880px;top:139px;width:1px;height:15px;background:#d09898"></div><div class="a" style="left:883px;top:146px;width:1px;height:8px;background:#d09898"></div><div class="a" style="left:898px;top:136px;width:1px;height:18px;background:#d09898"></div><div class="a" style="left:913px;top:138px;width:1px;height:16px;background:#d09898"></div><div class="a" style="left:923px;top:144px;width:1px;height:10px;background:#d09898"></div><div class="a" style="left:936px;top:143px;width:1px;height:11px;background:#d09898"></div><div class="a" style="left:948px;top:135px;width:2px;height:19px;background:#d09898"></div><div class="a" style="left:1002px;top:137px;width:1px;height:17px;background:#d09898"></div><div class="a" style="left:1079px;top:149px;width:1px;height:5px;background:#d09898"></div><div class="a" style="left:1096px;top:135px;width:3px;height:19px;background:#d09898"></div><div class="a" style="left:1125px;top:150px;width:1px;height:4px;background:#d09898"></div><div class="a" style="left:1204px;top:136px;width:1px;height:18px;background:#d09898"></div><div class="a" style="left:1207px;top:137px;width:1px;height:17px;background:#d09898"></div><div class="a" style="left:1217px;top:134px;width:3px;height:20px;background:#d09898"></div>
<div class="a" style="left:1349px;top:104px;width:17px;height:503px;background:#e8e8e6"></div>
<div class="a" style="left:1351px;top:122px;width:13px;height:466px;background:#cdcdcb"></div>
<svg style="left:1352px;top:109px" width="12" height="10"><path d="M2,7.5 L6,3.5 L10,7.5" stroke="#555" stroke-width="2" fill="none"/></svg>
<svg style="left:1352px;top:593px" width="12" height="10"><path d="M2,2.5 L6,6.5 L10,2.5" stroke="#555" stroke-width="2.1" fill="none"/></svg>
<div class="a" style="left:0;top:606px;width:1366px;height:18px;background:#eff1ed"></div>
<svg style="left:1336px;top:609px" width="12" height="12"><path d="M3,2.5 L7.5,6 L3,9.5" stroke="#555" stroke-width="2.1" fill="none"/></svg>
<div class="a" style="left:1332px;top:606px;width:1px;height:18px;background:#ccc"></div>
<div class="a" style="left:0;top:624px;width:1366px;height:56px;background:#eff1ed;border-top:1px solid #c8c8c6;border-bottom:1px solid #c8c8c6"></div>
<div class="grip" style="left:2px;top:625px;height:54px"></div>
<div class="t" style="left:15px;top:633px;font-size:13px;color:#222">Pr</div>
<div class="a" style="left:16px;top:652px;width:30px;height:22px;background:#fff;border:1px solid #b8b8b8"></div>
<div class="t" style="left:21px;top:657px;font-size:12px;color:#222">4</div>
<div class="a" style="left:1336px;top:625px;width:1px;height:28px;background:#aaa"></div><div class="a" style="left:1339px;top:625px;width:1px;height:28px;background:#aaa"></div>
<div class="a" style="left:1332px;top:652px;width:34px;height:1px;background:#c8c8c6"></div>
<div class="a" style="left:0;top:680px;width:1366px;height:24px;background:#eff1ed"></div>
<div class="a" style="left:10px;top:682px;width:1px;height:22px;background:#c8c8c6"></div>
<div class="t" style="left:13px;top:688px;font-size:12px;color:#222">Status</div>
<div class="a" style="left:26px;top:153px;width:1307px;height:560px;background:#e6e7e5;border-left:1px solid #c8c8c8;border-top:1px solid #c8c8c8"></div>
<div class="a" style="left:27px;top:154px;width:1299px;height:560px;background:#e8eae7"></div>
<div class="a" style="left:33px;top:183px;width:1293px;height:530px;background:#eff0ed;border-left:1px solid #dcdcda;border-top:1px solid #dcdcda"></div>
<div class="t" style="left:617px;top:161px;font-size:14.3px;color:#222">Frequency Analysis</div>
<div class="a" style="left:1237px;top:166px;width:8px;height:2px;background:#777"></div>
<div class="a" style="left:1263px;top:160px;width:10px;height:8px;border:1px solid #222;border-top-width:2px"></div>
<div class="a" style="left:1281px;top:154px;width:45px;height:20px;background:#c7c8c6"></div>
<svg style="left:1299px;top:160px" width="10" height="10"><path d="M1,1 L9,9 M9,1 L1,9" stroke="#fff" stroke-width="1.4"/></svg>
<div class="a" style="left:33px;top:688px;width:1293px;height:1px;background:#d8d8d6"></div>
<svg style="left:0;top:0" width="1366" height="704">
<defs>
<clipPath id="cg"><path d="M77.5,517.7 L77.5,439.8 L78.1,439.7 L78.8,439.7 L79.5,439.6 L80.4,439.5 L81.3,439.4 L82.4,439.3 L83.4,439.2 L84.6,439.1 L85.7,439.0 L86.9,438.9 L88.1,438.8 L89.3,438.7 L90.5,438.6 L91.7,438.5 L92.8,438.4 L93.9,438.3 L95.0,438.2 L96.0,438.1 L96.9,438.1 L97.8,438.0 L98.7,437.9 L99.6,437.9 L100.5,437.8 L101.4,437.8 L102.3,437.7 L103.2,437.6 L104.2,437.6 L105.1,437.6 L106.1,437.5 L107.2,437.5 L108.2,437.4 L109.3,437.4 L110.5,437.4 L111.7,437.3 L113.0,437.3 L113.8,437.3 L114.7,437.3 L115.6,437.3 L116.6,437.2 L117.6,437.2 L118.6,437.2 L119.6,437.2 L120.6,437.2 L121.7,437.2 L122.8,437.2 L123.9,437.2 L125.0,437.2 L126.1,437.2 L127.2,437.2 L128.3,437.2 L129.5,437.2 L130.6,437.2 L131.7,437.2 L132.8,437.2 L133.8,437.2 L134.9,437.2 L136.0,437.2 L137.0,437.2 L138.0,437.2 L139.0,437.2 L139.9,437.2 L140.8,437.3 L141.7,437.3 L142.5,437.3 L143.8,437.3 L145.1,437.4 L146.3,437.4 L147.5,437.5 L148.6,437.5 L149.6,437.6 L150.7,437.6 L151.6,437.7 L152.6,437.8 L153.5,437.9 L154.4,437.9 L155.4,438.0 L156.3,438.1 L157.2,438.2 L158.1,438.3 L159.0,438.4 L160.0,438.5 L161.1,438.6 L162.2,438.8 L163.2,438.9 L164.2,439.0 L165.2,439.2 L166.2,439.4 L167.2,439.5 L168.2,439.7 L169.2,439.9 L170.3,440.0 L171.3,440.2 L172.4,440.4 L173.4,440.6 L174.6,440.8 L175.7,441.0 L176.6,441.2 L177.6,441.3 L178.6,441.5 L179.6,441.7 L180.6,441.9 L181.6,442.0 L182.6,442.2 L183.7,442.4 L184.7,442.6 L185.8,442.8 L186.8,443.0 L187.9,443.2 L188.9,443.4 L190.0,443.6 L191.0,443.8 L192.0,444.0 L193.0,444.1 L194.0,444.3 L195.0,444.5 L196.1,444.7 L197.1,444.9 L198.1,445.1 L199.1,445.2 L200.0,445.4 L201.0,445.6 L202.0,445.8 L202.9,446.0 L203.9,446.1 L204.8,446.3 L205.8,446.5 L206.9,446.7 L207.9,446.8 L209.0,447.0 L210.2,447.2 L211.4,447.4 L212.6,447.6 L213.5,447.7 L214.4,447.9 L215.4,448.0 L216.3,448.2 L217.3,448.3 L218.4,448.5 L219.4,448.6 L220.5,448.8 L221.5,448.9 L222.6,449.1 L223.7,449.2 L224.8,449.4 L225.9,449.5 L227.0,449.7 L228.1,449.8 L229.2,450.0 L230.3,450.1 L231.4,450.3 L232.5,450.4 L233.5,450.6 L234.6,450.7 L235.6,450.9 L236.6,451.0 L237.6,451.2 L238.5,451.3 L239.7,451.5 L240.8,451.7 L242.0,451.8 L243.2,452.0 L244.4,452.2 L245.5,452.4 L246.7,452.6 L247.8,452.7 L249.0,452.9 L250.1,453.1 L251.1,453.3 L252.2,453.5 L253.2,453.6 L254.1,453.8 L255.1,453.9 L255.9,454.1 L256.7,454.2 L257.5,454.4 L258.2,454.5 L258.8,454.6 L261.3,455.2 L261.8,455.6 L262.0,455.8 L262.0,517.7 Z"/><path d="M655,517.7V242.1H656V248.6H657V254.3H658V232.4H659V237.7H660V239.4H661V230.6H662V233.4H663V228.3H664V234.7H665V227.2H666V232.4H667V228.8H668V227.8H669V230.5H670V230.2H671V232.7H672V247.3H673V234.7H674V245.1H675V256.8H676V267.7H677V266.5H678V255.1H679V239.5H680V228.9H681V230.8H682V236.4H683V238.3H684V241.0H685V238.7H686V225.5H687V224.4H688V214.2H689V211.6H690V212.0H691V218.0H692V207.6H693V207.2H694V212.6H695V218.3H696V205.4H697V218.7H698V202.4H699V205.9H700V206.3H701V208.2H702V207.6H703V207.7H704V214.9H705V215.7H706V215.2H707V220.4H708V218.7H709V218.9H710V215.0H711V209.5H712V211.0H713V220.3H714V208.5H715V214.0H716V213.4H717V213.5H718V207.9H719V206.3H720V208.0H721V207.8H722V215.0H723V205.6H724V215.5H725V211.4H726V215.3H727V217.2H728V219.5H729V226.2H730V238.0H731V228.3H732V228.8H733V230.7H734V237.4H735V232.0H736V245.8H737V236.4H738V233.7H739V234.6H740V240.1H741V239.0H742V243.7H743V245.4H744V246.9H745V243.8H746V242.2H747V241.5H748V236.4H749V234.0H750V234.0H751V228.0H752V226.8H753V227.3H754V224.1H755V246.3H756V235.8H757V240.6H758V249.8H759V259.2H760V252.8H761V247.6H762V242.5H763V244.3H764V221.0H765V221.4H766V228.9H767V227.9H768V229.0H769V224.9H770V233.9H771V229.2H772V232.0H773V221.6H774V223.2H775V218.2H776V212.0H777V208.4H778V206.5H779V219.5H780V205.7H781V199.2H782V213.7H783V203.2H784V197.3H785V197.1H786V193.2H787V194.8H788V198.3H789V202.8H790V204.6H791V205.7H792V214.8H793V205.1H794V214.3H795V207.7H796V209.8H797V221.5H798V210.1H799V208.7H800V221.5H801V214.4H802V239.1H803V233.6H804V269.1H805V244.5H806V236.5H807V231.4H808V232.0H809V225.5H810V237.6H811V238.5H812V239.3H813V251.7H814V286.3H815V279.8H816V285.1H817V282.6H818V266.1H819V256.7H820V250.2H821V249.9H822V247.4H823V251.7H824V258.6H825V258.4H826V263.0H827V254.9H828V257.4H829V255.8H830V255.0H831V254.1H832V260.6H833V254.8H834V248.9H835V247.6H836V248.9H837V245.9H838V258.3H839V265.6H840V277.8H841V274.1H842V278.2H843V272.9H844V268.5H845V276.4H846V268.8H847V265.6H848V266.5H849V266.1H850V263.2H851V280.4H852V261.0H853V262.2H854V260.9H855V260.3H856V272.7H857V278.7H858V277.8H859V276.6H860V276.5H861V279.1H862V285.6H863V286.1H864V287.7H865V295.5H866V294.9H867V299.7H868V305.8H869V315.1H870V327.4H871V340.3H872V355.6H873V352.6H874V348.0H875V349.7H876V330.4H877V330.0H878V336.6H879V317.6H880V316.6H881V301.4H882V295.1H883V290.4H884V281.7H885V284.9H886V288.2H887V286.5H888V293.9H889V291.1H890V283.2H891V277.2H892V276.4H893V282.0H894V261.4H895V261.9H896V263.7H897V263.8H898V258.2H899V255.1H900V263.1H901V272.3H902V261.3H903V266.3H904V280.2H905V271.0H906V266.4H907V266.7H908V274.7H909V264.7H910V282.5H911V280.4H912V285.0H913V288.5H914V289.3H915V313.4H916V317.5H917V334.0H918V343.9H919V336.3H920V326.8H921V332.8H922V311.7H923V303.3H924V301.0H925V301.3H926V310.7H927V309.8H928V311.3H929V314.4H930V330.5H931V309.9H932V310.7H933V312.5H934V312.2H935V305.4H936V306.7H937V321.2H938V329.8H939V337.5H940V352.7H941V357.9H942V363.2H943V361.3H944V351.5H945V349.3H946V335.5H947V328.1H948V326.4H949V323.1H950V322.7H951V324.5H952V325.1H953V330.6H954V327.4H955V330.5H956V329.8H957V337.6H958V336.8H959V343.4H960V352.0H961V353.0H962V362.9H963V358.1H964V376.4H965V368.2H966V376.2H967V376.2H968V389.9H969V377.8H970V370.2H971V368.5H972V364.1H973V351.5H974V357.9H975V375.8H976V406.1H977V399.8H978V410.1H979V412.4H980V395.4H981V390.5H982V388.2H983V382.6H984V368.0H985V361.5H986V365.5H987V368.2H988V358.3H989V360.7H990V356.9H991V355.8H992V350.7H993V348.4H994V349.7H995V347.6H996V336.4H997V347.3H998V339.7H999V339.5H1000V324.1H1001V327.7H1002V328.5H1003V334.0H1004V340.6H1005V342.9H1006V343.2H1007V347.5H1008V339.7H1009V341.6H1010V351.4H1011V339.5H1012V335.5H1013V343.4H1014V337.3H1015V340.2H1016V346.2H1017V346.4H1018V350.7H1019V355.0H1020V364.6H1021V359.1H1022V362.8H1023V369.8H1024V374.1H1025V385.8H1026V376.5H1027V374.1H1028V377.2H1029V377.9H1030V373.3H1031V371.2H1032V378.2H1033V374.8H1034V370.8H1035V386.0H1036V372.6H1037V378.8H1038V375.5H1039V380.0H1040V386.5H1041V395.1H1042V383.3H1043V376.1H1044V367.7H1045V364.5H1046V362.6H1047V363.6H1048V357.9H1049V355.7H1050V357.4H1051V363.1H1052V352.6H1053V354.6H1054V356.4H1055V354.5H1056V364.6H1057V353.9H1058V361.4H1059V357.3H1060V360.0H1061V382.6H1062V362.0H1063V364.1H1064V367.8H1065V366.7H1066V371.2H1067V388.2H1068V381.8H1069V380.6H1070V378.0H1071V380.7H1072V393.0H1073V391.0H1074V404.1H1075V407.8H1076V413.0H1077V419.5H1078V429.7H1079V422.2H1080V424.1H1081V411.5H1082V408.5H1083V410.0H1084V411.0H1085V418.8H1086V416.9H1087V415.3H1088V405.7H1089V402.0H1090V392.3H1091V391.9H1092V384.5H1093V385.2H1094V388.8H1095V379.7H1096V377.9H1097V377.9H1098V389.7H1099V395.0H1100V402.1H1101V404.1H1102V397.0H1103V396.8H1104V403.5H1105V410.9H1106V399.5H1107V398.6H1108V409.4H1109V427.8H1110V449.7H1111V464.5H1112V430.3H1113V420.7H1114V411.6H1115V407.7H1116V401.7H1117V394.8H1118V395.6H1119V386.2H1120V387.3H1121V387.5H1122V399.0H1123V394.3H1124V401.9H1125V393.4H1126V400.6H1127V399.3H1128V400.8H1129V398.1H1130V394.5H1131V385.3H1132V390.9H1133V397.1H1134V404.9H1135V409.3H1136V418.4H1137V399.1H1138V387.6H1139V386.4H1140V389.8H1141V379.7H1142V378.2H1143V393.0H1144V396.4H1145V392.4H1146V391.0H1147V396.3H1148V399.9H1149V395.6H1150V415.7H1151V420.6H1152V427.7H1153V436.5H1154V427.6H1155V410.6H1156V389.8H1157V386.9H1158V396.3H1159V396.1H1160V391.9H1161V388.8H1162V393.4H1163V398.1H1164V385.6H1165V387.3H1166V391.3H1167V397.6H1168V397.7H1169V400.0H1170V397.4H1171V396.7H1172V390.5H1173V388.8H1174V391.3H1175V384.8H1176V389.2H1177V378.6H1178V376.8H1179V382.2H1180V384.6H1181V385.4H1182V398.2H1183V390.8H1184V388.8H1185V388.3H1186V386.2H1187V384.3H1188V384.6H1189V388.3H1190V389.2H1191V392.5H1192V391.4H1193V396.0H1194V396.2H1195V398.0H1196V397.4H1197V394.2H1198V397.5H1199V395.6H1200V400.4H1201V402.7H1202V407.9H1203V410.8H1204V414.6H1205V431.2H1206V414.8H1207V415.8H1208V417.6H1209V419.8H1210V438.4H1211V426.9H1212V434.7H1213V435.5H1214V433.5H1215V439.3H1216V440.6H1217V453.7H1218V449.3H1219V450.6H1220V452.5H1221V450.0H1222V464.0H1223V464.3H1224V469.8H1225V464.5H1226V468.5H1227V473.4H1228V477.8H1229V487.2H1230V480.8H1231V492.3H1232V497.8H1233V491.5H1234V492.2H1235V500.5H1236V499.8H1237V509.6H1238V509.3H1239V515.7H1240V517.7Z"/></clipPath>
<clipPath id="cp"><path d="M207.8,517.7 L207.8,517.7 L208.8,516.5 L209.8,515.4 L210.8,514.2 L211.8,513.0 L212.8,511.9 L213.7,510.7 L214.7,509.5 L215.7,508.4 L216.7,507.2 L217.7,506.1 L218.7,504.9 L219.7,503.7 L220.7,502.6 L221.7,501.4 L222.7,500.2 L223.6,499.1 L224.6,497.9 L225.6,496.7 L226.6,495.6 L227.6,494.4 L228.6,493.2 L229.6,492.1 L230.6,490.9 L231.6,489.8 L232.6,488.6 L233.5,487.4 L234.5,486.3 L235.5,485.1 L236.5,483.9 L237.5,482.8 L238.5,481.6 L239.5,480.2 L240.5,478.9 L241.5,477.6 L242.6,476.2 L243.6,474.9 L244.6,473.5 L245.6,472.2 L246.6,470.8 L247.6,469.5 L248.7,468.1 L249.7,466.8 L250.7,465.4 L251.7,464.1 L252.7,462.7 L253.7,461.4 L254.7,460.0 L255.8,458.7 L256.8,457.3 L257.8,456.0 L258.8,454.6 L259.4,453.9 L260.0,453.0 L260.8,452.0 L261.7,450.9 L262.6,449.6 L263.6,448.3 L264.6,446.9 L265.7,445.5 L266.9,444.0 L268.0,442.5 L269.2,441.0 L270.5,439.4 L271.7,437.9 L272.9,436.4 L274.2,435.0 L275.4,433.6 L276.3,432.6 L277.2,431.6 L278.2,430.6 L279.2,429.6 L280.2,428.6 L281.3,427.6 L282.3,426.6 L283.4,425.5 L284.5,424.5 L285.5,423.5 L286.6,422.5 L287.7,421.4 L288.8,420.4 L289.8,419.4 L290.9,418.4 L291.9,417.4 L293.0,416.3 L293.9,415.3 L294.9,414.3 L295.8,413.4 L296.7,412.4 L297.6,411.4 L298.9,409.9 L300.1,408.5 L301.2,407.1 L302.3,405.8 L303.4,404.4 L304.4,403.1 L305.4,401.8 L306.4,400.4 L307.4,399.0 L308.3,397.6 L309.3,396.1 L310.3,394.5 L311.3,392.8 L312.3,391.0 L313.4,389.1 L314.4,387.0 L315.6,384.8 L316.7,382.6 L317.8,380.3 L318.9,377.9 L320.0,375.5 L321.1,373.0 L322.2,370.7 L323.2,368.3 L324.2,366.0 L325.2,363.8 L326.1,361.7 L327.0,359.7 L328.3,356.8 L329.4,354.1 L330.4,351.5 L331.4,349.0 L332.3,346.6 L333.2,344.3 L334.1,342.0 L335.0,339.8 L336.0,337.5 L337.1,335.1 L338.2,332.9 L339.2,330.8 L340.3,328.7 L341.3,326.6 L342.4,324.3 L343.6,321.8 L344.8,319.0 L345.7,316.7 L346.7,314.1 L347.7,311.3 L348.7,308.4 L349.8,305.4 L350.8,302.4 L351.8,299.5 L352.9,296.6 L353.9,294.0 L354.9,291.6 L355.8,289.5 L356.9,287.3 L357.8,285.3 L358.7,283.5 L359.6,281.9 L360.5,280.5 L361.4,279.3 L362.5,278.3 L363.7,277.4 L365.0,276.6 L365.9,276.2 L366.8,275.9 L367.8,275.6 L368.9,275.4 L370.0,275.3 L371.1,275.2 L372.3,275.1 L373.5,275.1 L374.6,275.1 L375.8,275.2 L376.9,275.3 L378.0,275.5 L379.0,275.7 L380.0,276.0 L380.9,276.3 L381.7,276.6 L383.2,277.5 L384.4,278.7 L385.4,280.1 L386.2,281.7 L387.0,283.5 L387.9,285.5 L389.0,287.7 L390.0,289.7 L391.0,292.0 L392.1,294.6 L393.2,297.3 L394.3,300.0 L395.4,302.5 L396.4,304.8 L397.4,306.7 L398.3,308.0 L399.6,309.2 L400.8,309.2 L401.8,308.4 L402.8,307.3 L403.9,306.0 L404.9,304.5 L406.0,302.4 L407.0,300.0 L408.2,297.9 L409.3,296.5 L410.5,296.2 L411.4,296.9 L412.4,298.3 L413.4,300.2 L414.4,302.4 L415.5,304.8 L416.5,307.3 L417.6,309.6 L418.6,311.7 L419.6,313.7 L420.6,315.8 L421.6,318.0 L422.6,320.1 L423.6,322.1 L424.6,323.9 L425.7,325.4 L426.8,326.5 L427.8,327.1 L428.8,327.6 L429.8,327.9 L430.9,328.1 L432.0,328.1 L433.1,328.0 L434.2,327.8 L435.2,327.4 L436.2,327.0 L437.1,326.5 L438.3,325.5 L439.4,324.2 L440.5,322.7 L441.5,321.0 L442.5,319.2 L443.5,317.3 L444.5,315.4 L445.6,312.7 L446.8,309.3 L447.9,305.8 L449.0,302.8 L450.0,300.9 L451.1,300.6 L452.2,302.5 L453.3,306.1 L454.4,310.8 L455.4,315.8 L456.4,320.7 L457.4,324.6 L458.8,329.3 L460.0,333.5 L461.2,336.9 L462.2,339.4 L463.3,341.6 L464.7,340.0 L465.5,338.4 L466.4,336.1 L467.4,333.4 L468.5,330.5 L469.6,327.8 L470.7,325.4 L471.7,323.6 L472.7,322.6 L473.7,322.2 L474.7,322.1 L475.8,322.2 L476.8,322.2 L477.8,322.0 L478.8,321.3 L479.8,320.2 L480.8,318.8 L481.8,317.1 L482.8,315.4 L483.8,313.5 L484.8,311.5 L485.8,309.5 L486.8,307.3 L487.8,304.9 L488.8,302.4 L489.8,299.9 L490.8,297.4 L491.8,295.1 L492.8,293.1 L493.8,291.2 L494.8,289.3 L495.8,287.5 L496.8,285.9 L497.8,284.7 L498.8,284.0 L499.8,283.8 L500.8,284.3 L501.9,285.5 L503.0,287.1 L504.0,289.1 L505.0,291.3 L506.0,293.4 L506.9,295.5 L508.2,299.4 L509.3,303.9 L510.3,308.1 L511.6,311.0 L512.5,311.9 L513.4,312.2 L514.4,312.2 L515.5,312.0 L516.5,311.8 L517.6,311.7 L518.6,311.9 L519.6,312.3 L520.6,312.7 L521.5,313.2 L522.5,313.8 L523.5,314.5 L524.5,315.5 L525.6,316.6 L526.6,318.1 L527.6,320.2 L528.7,322.6 L529.7,325.0 L530.8,327.2 L531.9,328.9 L533.0,329.8 L534.0,329.7 L535.0,328.1 L536.1,325.1 L537.2,321.2 L538.2,316.8 L539.3,312.5 L540.2,308.8 L541.2,306.1 L542.0,304.9 L543.4,307.1 L544.5,313.0 L545.5,320.1 L546.7,326.0 L547.8,329.9 L548.8,334.0 L550.0,337.6 L551.2,339.9 L552.4,340.0 L553.3,338.0 L554.3,334.2 L555.4,329.3 L556.4,324.1 L557.4,319.3 L558.4,315.8 L559.4,314.2 L560.5,315.3 L561.6,318.7 L562.6,323.4 L563.6,328.4 L564.6,332.7 L565.5,335.3 L566.7,336.3 L567.9,335.4 L569.0,333.4 L570.2,330.6 L571.2,328.2 L572.2,325.1 L573.3,321.5 L574.3,318.0 L575.3,314.6 L576.3,311.9 L577.6,308.5 L578.8,305.6 L580.0,303.5 L581.0,302.5 L582.2,303.8 L583.3,306.9 L584.0,309.3 L584.0,517.7 Z"/><path d="M603,517.7V244.1H604V239.5H605V234.3H606V234.4H607V226.8H608V222.2H609V219.1H610V222.5H611V214.5H612V213.1H613V212.9H614V209.3H615V210.8H616V210.4H617V206.4H618V207.1H619V209.1H620V208.1H621V205.3H622V214.0H623V204.9H624V204.8H625V207.7H626V205.7H627V206.1H628V208.5H629V207.9H630V215.3H631V218.5H632V207.4H633V212.6H634V214.0H635V209.4H636V211.5H637V220.0H638V217.5H639V198.7H640V208.4H641V230.2H642V212.5H643V214.7H644V213.6H645V216.6H646V219.8H647V225.8H648V213.9H649V215.7H650V218.0H651V228.6H652V232.9H653V238.7H654V239.8H655V250.2H656V247.4H657V250.4H658V517.7Z"/><path d="M1236.0,517.7 L1236.0,500.0 L1238.4,496.0 L1242.3,506.2 L1246.1,513.9 L1247.4,517.7 L1247.4,517.7 Z"/></clipPath>
<clipPath id="co"><path d="M207.8,517.7 L207.8,517.7 L208.8,516.5 L209.8,515.4 L210.8,514.2 L211.8,513.0 L212.8,511.9 L213.7,510.7 L214.7,509.5 L215.7,508.4 L216.7,507.2 L217.7,506.1 L218.7,504.9 L219.7,503.7 L220.7,502.6 L221.7,501.4 L222.7,500.2 L223.6,499.1 L224.6,497.9 L225.6,496.7 L226.6,495.6 L227.6,494.4 L228.6,493.2 L229.6,492.1 L230.6,490.9 L231.6,489.8 L232.6,488.6 L233.5,487.4 L234.5,486.3 L235.5,485.1 L236.5,483.9 L237.5,482.8 L238.5,481.6 L239.5,480.2 L240.5,478.9 L241.5,477.6 L242.6,476.2 L243.6,474.9 L244.6,473.5 L245.6,472.2 L246.6,470.8 L247.6,469.5 L248.7,468.1 L249.7,466.8 L250.7,465.4 L251.7,464.1 L252.7,462.7 L253.7,461.4 L254.7,460.0 L255.8,458.7 L256.8,457.3 L257.8,456.0 L258.8,454.6 L259.3,454.8 L260.0,455.0 L260.6,455.2 L261.4,455.5 L262.2,455.7 L263.0,456.0 L263.9,456.3 L264.9,456.6 L265.9,457.0 L266.9,457.3 L268.0,457.6 L269.1,458.0 L270.2,458.4 L271.4,458.8 L272.5,459.1 L273.7,459.5 L274.9,459.9 L276.1,460.3 L277.3,460.7 L278.5,461.1 L279.7,461.5 L280.8,461.9 L282.0,462.3 L283.1,462.7 L284.2,463.0 L285.3,463.4 L286.4,463.7 L287.4,464.1 L288.4,464.4 L289.3,464.7 L290.2,465.0 L291.4,465.4 L292.6,465.8 L293.7,466.1 L294.8,466.5 L295.8,466.8 L296.9,467.1 L297.9,467.4 L298.9,467.7 L299.8,468.0 L300.8,468.3 L301.7,468.6 L302.7,468.9 L303.6,469.2 L304.5,469.5 L305.5,469.8 L306.4,470.1 L307.4,470.4 L308.3,470.8 L309.3,471.1 L310.3,471.5 L311.3,471.9 L312.3,472.3 L313.3,472.7 L314.3,473.2 L315.4,473.7 L316.5,474.2 L317.6,474.7 L318.7,475.3 L319.8,475.8 L320.9,476.4 L322.0,477.0 L323.1,477.6 L324.2,478.2 L325.3,478.8 L326.4,479.3 L327.5,479.9 L328.5,480.4 L329.6,480.9 L330.6,481.4 L331.6,481.8 L332.5,482.2 L333.4,482.6 L334.3,482.9 L335.2,483.2 L336.0,483.4 L337.4,483.6 L338.7,483.7 L339.9,483.6 L341.1,483.4 L342.1,483.0 L343.0,482.6 L344.0,482.2 L344.9,481.8 L345.7,481.4 L346.6,481.1 L347.5,480.9 L348.5,480.8 L349.6,480.8 L350.6,480.9 L351.6,481.1 L352.6,481.2 L353.6,481.5 L354.6,481.7 L355.6,482.0 L356.5,482.3 L357.5,482.7 L358.5,483.0 L359.5,483.4 L360.5,483.9 L361.5,484.5 L362.4,485.2 L363.4,486.0 L364.3,486.8 L365.3,487.5 L366.3,488.2 L367.3,488.7 L368.4,489.1 L369.5,489.2 L370.6,489.0 L371.6,488.6 L372.6,487.9 L373.6,487.0 L374.7,485.9 L375.8,484.7 L377.0,483.5 L378.1,482.2 L379.3,480.9 L380.4,479.6 L381.5,478.5 L382.5,477.5 L383.5,476.8 L384.5,476.2 L385.4,476.0 L386.7,476.1 L387.8,476.7 L388.9,477.7 L389.9,479.0 L390.9,480.5 L391.8,482.1 L392.7,483.8 L393.7,485.5 L394.6,487.1 L395.7,489.1 L396.7,491.5 L397.8,494.1 L398.8,496.8 L399.8,499.3 L400.8,501.4 L401.8,502.9 L402.7,503.7 L403.9,503.4 L405.0,501.8 L406.1,499.4 L407.2,496.8 L408.3,494.3 L409.4,492.6 L410.4,491.6 L411.3,490.6 L412.2,489.8 L413.2,489.1 L414.3,488.7 L415.4,488.7 L416.8,489.0 L417.7,489.5 L418.7,490.2 L419.7,491.2 L420.8,492.4 L421.9,493.7 L423.0,495.0 L424.2,496.2 L425.3,497.4 L426.5,498.5 L427.6,499.3 L428.7,499.8 L429.7,500.0 L430.8,499.8 L431.9,499.4 L432.9,498.7 L433.9,497.8 L435.0,496.7 L436.0,495.5 L437.0,494.2 L438.0,492.9 L438.9,491.5 L439.9,490.2 L440.8,489.0 L441.9,487.4 L443.0,485.4 L444.0,483.3 L445.0,481.1 L446.0,479.0 L447.0,477.1 L448.0,475.6 L449.0,474.6 L450.0,474.2 L451.1,474.6 L452.2,475.9 L453.4,477.6 L454.5,479.8 L455.7,482.1 L456.8,484.3 L457.7,486.4 L458.5,488.0 L459.2,489.0 L460.0,485.4 L460.6,484.1 L461.3,482.7 L462.1,481.0 L463.1,479.1 L464.1,477.1 L465.1,475.0 L466.2,472.8 L467.4,470.6 L468.5,468.3 L469.7,466.0 L470.8,463.7 L472.0,461.4 L473.1,459.3 L474.1,457.2 L475.1,455.2 L476.2,453.1 L477.2,451.0 L478.3,449.0 L479.4,446.9 L480.5,444.8 L481.5,442.7 L482.6,440.6 L483.6,438.6 L484.6,436.6 L485.6,434.7 L486.5,432.7 L487.3,430.9 L488.1,429.1 L489.5,425.6 L490.7,422.2 L491.7,419.0 L492.6,415.9 L493.4,413.0 L494.3,410.3 L495.2,408.0 L496.2,405.5 L497.2,403.2 L498.1,401.2 L499.0,399.7 L500.1,398.8 L501.3,398.6 L502.2,399.0 L503.1,399.9 L504.1,401.2 L505.2,402.8 L506.3,404.4 L507.4,406.1 L508.5,407.7 L509.5,409.0 L510.6,409.9 L511.6,410.3 L512.7,410.2 L513.7,409.5 L514.8,408.5 L515.8,407.2 L516.8,405.8 L517.8,404.4 L518.8,403.0 L519.9,401.8 L520.9,401.0 L522.0,400.5 L523.0,400.3 L524.1,400.2 L525.2,400.2 L526.3,400.2 L527.3,400.2 L528.4,399.9 L529.4,399.4 L530.3,398.6 L531.4,397.1 L532.5,395.1 L533.6,392.9 L534.5,390.5 L535.5,387.8 L536.5,385.0 L537.4,382.2 L538.5,378.3 L539.5,373.5 L540.5,368.6 L541.5,364.1 L542.5,360.6 L543.5,358.8 L544.7,359.5 L545.8,362.6 L546.9,366.7 L548.0,370.6 L549.1,372.8 L550.3,373.5 L551.5,373.1 L552.6,371.4 L553.8,368.2 L554.8,363.5 L555.8,357.0 L556.9,350.0 L558.1,343.9 L559.4,340.0 L560.3,339.2 L561.3,339.5 L562.4,340.5 L563.5,341.9 L564.6,343.4 L565.7,344.6 L566.8,345.1 L567.8,344.7 L568.9,342.9 L570.0,340.2 L571.0,336.9 L572.1,333.2 L573.1,329.6 L574.0,326.3 L574.9,323.6 L576.1,320.7 L577.1,318.4 L578.1,316.4 L579.1,314.8 L580.0,313.3 L581.1,312.1 L582.0,311.7 L583.0,311.0 L584,311.0 V307.7H585V304.5H586V301.4H587V298.2H588V295.0H589V289.4H590V281.5H591V277.3H592V277.0H593V276.7H594V264.9H595V241.7H596V239.4H597V234.5H598V228.2H599V231.7H600V233.9H601V235.9H602V247.1H603V247.5H604V237.9H605V228.1H606V235.4H607V228.6H608V233.3H609V220.8H610V220.1H611V232.6H612V215.7H613V214.8H614V215.7H615V216.1H616V223.4H617V235.6H618V218.3H619V228.0H620V220.1H621V216.9H622V228.0H623V215.6H624V217.1H625V215.0H626V218.4H627V218.3H628V220.6H629V220.5H630V223.9H631V227.8H632V223.1H633V225.0H634V227.8H635V235.7H636V248.2H637V252.8H638V233.5H639V222.5H640V219.2H641V234.0H642V239.8H643V251.1H644V242.2H645V237.2H646V256.8H647V237.6H648V229.8H649V232.6H650V228.4H651V234.4H652V244.5H653V235.4H654V237.0H655V245.1H656V253.6H657V254.3H658V242.0H659V240.9H660V247.9H661V245.9H662V252.0H663V256.3H664V244.3H665V252.8H666V248.0H667V250.1H668V255.4H669V250.2H670V260.3H671V253.9H672V264.0H673V258.8H674V263.5H675V263.5H676V267.7H677V266.5H678V263.6H679V258.1H680V265.1H681V261.9H682V259.3H683V261.9H684V272.5H685V261.5H686V262.3H687V254.5H688V243.2H689V245.8H690V244.6H691V249.9H692V246.8H693V235.5H694V237.9H695V231.5H696V233.0H697V231.0H698V226.3H699V229.1H700V229.0H701V227.7H702V236.2H703V238.2H704V231.8H705V234.9H706V243.4H707V245.4H708V235.0H709V230.2H710V234.0H711V221.5H712V217.2H713V220.3H714V216.4H715V222.4H716V228.7H717V219.6H718V233.5H719V229.7H720V223.7H721V207.8H722V215.0H723V205.6H724V215.5H725V211.4H726V224.7H727V228.7H728V235.8H729V247.6H730V255.9H731V255.9H732V246.0H733V250.9H734V263.0H735V248.6H736V245.8H737V256.6H738V254.7H739V254.4H740V253.4H741V259.7H742V253.7H743V248.2H744V246.9H745V246.2H746V244.0H747V242.9H748V248.0H749V254.5H750V258.9H751V240.4H752V242.8H753V242.3H754V262.4H755V247.2H756V251.1H757V251.5H758V258.2H759V259.2H760V268.3H761V255.6H762V251.3H763V247.5H764V245.7H765V243.2H766V239.8H767V240.6H768V247.0H769V245.3H770V245.5H771V247.3H772V252.5H773V247.7H774V243.5H775V241.8H776V237.7H777V236.4H778V230.8H779V227.3H780V234.2H781V220.5H782V215.1H783V213.7H784V214.7H785V217.8H786V214.6H787V217.3H788V221.7H789V221.5H790V236.1H791V227.6H792V246.0H793V233.2H794V236.6H795V242.5H796V238.9H797V242.2H798V242.8H799V242.5H800V250.5H801V267.7H802V253.0H803V250.6H804V269.1H805V257.6H806V249.1H807V250.6H808V252.6H809V254.1H810V265.4H811V268.1H812V280.4H813V282.8H814V286.3H815V279.8H816V285.1H817V282.6H818V270.2H819V272.5H820V275.9H821V270.0H822V269.3H823V271.2H824V274.1H825V274.6H826V282.0H827V285.8H828V280.9H829V282.3H830V282.4H831V278.0H832V274.8H833V274.8H834V276.0H835V269.9H836V270.1H837V277.0H838V289.4H839V297.7H840V285.0H841V304.1H842V293.8H843V294.8H844V297.3H845V292.1H846V310.1H847V299.8H848V292.8H849V306.0H850V287.1H851V292.1H852V293.4H853V297.7H854V283.4H855V286.3H856V288.2H857V291.7H858V294.2H859V297.0H860V300.8H861V308.8H862V306.2H863V320.3H864V343.6H865V330.8H866V331.9H867V342.0H868V343.1H869V345.0H870V344.7H871V349.3H872V355.6H873V352.6H874V352.7H875V349.7H876V346.9H877V357.9H878V337.8H879V329.1H880V327.7H881V311.5H882V301.0H883V300.6H884V306.6H885V306.0H886V305.4H887V307.4H888V305.2H889V304.5H890V298.6H891V300.2H892V289.7H893V284.8H894V281.8H895V279.6H896V286.5H897V280.2H898V280.7H899V281.6H900V285.4H901V284.0H902V288.9H903V284.1H904V284.8H905V289.7H906V300.6H907V297.3H908V301.3H909V304.7H910V309.2H911V322.7H912V305.3H913V317.3H914V304.0H915V319.1H916V328.7H917V337.3H918V353.5H919V348.6H920V337.7H921V332.8H922V325.9H923V324.7H924V324.6H925V329.4H926V327.6H927V341.1H928V337.9H929V335.1H930V338.9H931V335.1H932V336.6H933V338.4H934V336.8H935V339.6H936V343.4H937V343.2H938V343.6H939V349.3H940V362.6H941V361.6H942V367.0H943V368.0H944V363.5H945V364.7H946V355.8H947V352.1H948V347.1H949V360.1H950V343.5H951V347.9H952V350.3H953V348.0H954V351.0H955V352.9H956V352.4H957V365.6H958V359.1H959V364.5H960V364.3H961V368.6H962V378.8H963V380.0H964V390.6H965V388.5H966V383.7H967V381.6H968V389.9H969V383.7H970V384.6H971V377.1H972V373.5H973V381.7H974V383.6H975V415.3H976V418.6H977V431.8H978V440.3H979V437.8H980V428.8H981V417.4H982V417.8H983V399.5H984V399.9H985V386.9H986V388.4H987V387.6H988V380.7H989V379.7H990V378.5H991V376.0H992V372.8H993V376.8H994V373.5H995V365.9H996V363.8H997V362.7H998V358.3H999V358.0H1000V356.0H1001V362.9H1002V357.5H1003V357.4H1004V357.3H1005V363.0H1006V363.4H1007V358.4H1008V365.6H1009V357.4H1010V357.5H1011V366.5H1012V363.1H1013V357.0H1014V361.6H1015V368.0H1016V358.8H1017V363.7H1018V362.0H1019V372.7H1020V368.4H1021V369.4H1022V394.7H1023V389.6H1024V390.5H1025V396.1H1026V402.8H1027V420.5H1028V412.0H1029V408.0H1030V408.0H1031V404.5H1032V408.9H1033V411.9H1034V407.8H1035V411.0H1036V395.6H1037V394.0H1038V391.5H1039V396.3H1040V393.1H1041V395.1H1042V383.3H1043V376.1H1044V373.2H1045V381.6H1046V380.7H1047V364.3H1048V365.6H1049V360.8H1050V362.8H1051V363.1H1052V356.0H1053V354.7H1054V356.4H1055V375.6H1056V364.6H1057V359.3H1058V369.2H1059V366.9H1060V366.5H1061V382.6H1062V376.2H1063V378.5H1064V374.4H1065V393.4H1066V374.6H1067V388.2H1068V382.2H1069V384.8H1070V389.9H1071V395.6H1072V397.1H1073V402.6H1074V407.9H1075V417.5H1076V431.9H1077V434.2H1078V439.6H1079V433.9H1080V429.4H1081V430.0H1082V423.1H1083V420.2H1084V419.8H1085V423.4H1086V427.4H1087V426.0H1088V405.7H1089V411.7H1090V403.5H1091V401.5H1092V420.1H1093V391.8H1094V388.8H1095V379.7H1096V382.1H1097V383.4H1098V393.5H1099V412.2H1100V417.7H1101V423.0H1102V427.9H1103V430.2H1104V425.1H1105V427.0H1106V426.2H1107V429.5H1108V436.0H1109V462.5H1110V453.7H1111V464.5H1112V439.2H1113V427.4H1114V430.0H1115V418.0H1116V409.5H1117V411.0H1118V401.0H1119V390.7H1120V390.7H1121V390.0H1122V399.0H1123V394.6H1124V401.9H1125V400.4H1126V402.7H1127V413.4H1128V400.8H1129V398.1H1130V403.8H1131V391.8H1132V414.3H1133V422.6H1134V428.5H1135V410.9H1136V418.4H1137V404.6H1138V389.0H1139V391.4H1140V389.8H1141V389.1H1142V396.6H1143V402.9H1144V403.9H1145V409.4H1146V416.1H1147V414.7H1148V422.5H1149V441.0H1150V430.6H1151V443.3H1152V440.7H1153V436.8H1154V435.6H1155V421.3H1156V412.1H1157V425.6H1158V413.3H1159V416.2H1160V435.4H1161V433.1H1162V435.7H1163V431.2H1164V423.6H1165V426.5H1166V418.6H1167V417.3H1168V422.6H1169V428.8H1170V429.1H1171V434.0H1172V439.5H1173V447.9H1174V430.2H1175V422.6H1176V417.5H1177V421.2H1178V415.6H1179V428.9H1180V428.5H1181V432.5H1182V438.0H1183V438.8H1184V432.8H1185V432.4H1186V427.4H1187V427.8H1188V425.1H1189V425.8H1190V427.6H1191V433.7H1192V437.8H1193V427.0H1194V427.2H1195V427.8H1196V430.1H1197V431.0H1198V430.4H1199V435.4H1200V439.1H1201V442.8H1202V445.9H1203V453.9H1204V453.4H1205V447.3H1206V448.4H1207V449.5H1208V465.8H1209V467.3H1210V466.4H1211V470.7H1212V475.3H1213V490.0H1214V486.7H1215V501.8H1216V505.9H1217V500.6H1218V503.7H1219V502.0H1220V503.6H1221V501.3H1222V504.4H1223V501.7H1224V498.9H1225V499.3H1226V512.5H1227V511.1H1228V500.9H1229V497.8H1230V492.4H1231V494.4H1232V497.8H1233V497.7H1234V496.3H1235V504.5H1236V505.5H1237V509.6H1238V516.4H1239V517.5H1240V517.7Z"/></clipPath>
</defs>
<rect x="77.5" y="189.5" width="1194.0" height="328.20000000000005" fill="#fdfefc"/>
<rect x="77.5" y="206" width="1194.0" height="1" fill="#d0d0d0"/><rect x="77.5" y="223" width="1194.0" height="1" fill="#d0d0d0"/><rect x="77.5" y="240" width="1194.0" height="1" fill="#d0d0d0"/><rect x="77.5" y="258" width="1194.0" height="1" fill="#d0d0d0"/><rect x="77.5" y="275" width="1194.0" height="1" fill="#d0d0d0"/><rect x="77.5" y="293" width="1194.0" height="1" fill="#d0d0d0"/><rect x="77.5" y="310" width="1194.0" height="1" fill="#d0d0d0"/><rect x="77.5" y="327" width="1194.0" height="1" fill="#d0d0d0"/><rect x="77.5" y="344" width="1194.0" height="1" fill="#d0d0d0"/><rect x="77.5" y="361" width="1194.0" height="1" fill="#d0d0d0"/><rect x="77.5" y="379" width="1194.0" height="1" fill="#d0d0d0"/><rect x="77.5" y="396" width="1194.0" height="1" fill="#d0d0d0"/><rect x="77.5" y="413" width="1194.0" height="1" fill="#d0d0d0"/><rect x="77.5" y="431" width="1194.0" height="1" fill="#d0d0d0"/><rect x="77.5" y="448" width="1194.0" height="1" fill="#d0d0d0"/><rect x="77.5" y="465" width="1194.0" height="1" fill="#d0d0d0"/><rect x="77.5" y="482" width="1194.0" height="1" fill="#d0d0d0"/><rect x="77.5" y="500" width="1194.0" height="1" fill="#d0d0d0"/>
<rect x="77.5" y="208" width="1194.0" height="1" fill="#d0d0d0"/><rect x="77.5" y="226" width="1194.0" height="1" fill="#d0d0d0"/><rect x="77.5" y="243" width="1194.0" height="1" fill="#d0d0d0"/><rect x="77.5" y="260" width="1194.0" height="1" fill="#d0d0d0"/><rect x="77.5" y="277" width="1194.0" height="1" fill="#d0d0d0"/><rect x="77.5" y="294" width="1194.0" height="1" fill="#d0d0d0"/><rect x="77.5" y="311" width="1194.0" height="1" fill="#d0d0d0"/><rect x="77.5" y="328" width="1194.0" height="1" fill="#d0d0d0"/><rect x="77.5" y="346" width="1194.0" height="1" fill="#d0d0d0"/><rect x="77.5" y="363" width="1194.0" height="1" fill="#d0d0d0"/><rect x="77.5" y="380" width="1194.0" height="1" fill="#d0d0d0"/><rect x="77.5" y="397" width="1194.0" height="1" fill="#d0d0d0"/><rect x="77.5" y="414" width="1194.0" height="1" fill="#d0d0d0"/><rect x="77.5" y="431" width="1194.0" height="1" fill="#d0d0d0"/><rect x="77.5" y="448" width="1194.0" height="1" fill="#d0d0d0"/><rect x="77.5" y="466" width="1194.0" height="1" fill="#d0d0d0"/><rect x="77.5" y="483" width="1194.0" height="1" fill="#d0d0d0"/><rect x="77.5" y="500" width="1194.0" height="1" fill="#d0d0d0"/>
<path d="M77.5,517.7 L77.5,439.8 L78.1,439.7 L78.8,439.7 L79.5,439.6 L80.4,439.5 L81.3,439.4 L82.4,439.3 L83.4,439.2 L84.6,439.1 L85.7,439.0 L86.9,438.9 L88.1,438.8 L89.3,438.7 L90.5,438.6 L91.7,438.5 L92.8,438.4 L93.9,438.3 L95.0,438.2 L96.0,438.1 L96.9,438.1 L97.8,438.0 L98.7,437.9 L99.6,437.9 L100.5,437.8 L101.4,437.8 L102.3,437.7 L103.2,437.6 L104.2,437.6 L105.1,437.6 L106.1,437.5 L107.2,437.5 L108.2,437.4 L109.3,437.4 L110.5,437.4 L111.7,437.3 L113.0,437.3 L113.8,437.3 L114.7,437.3 L115.6,437.3 L116.6,437.2 L117.6,437.2 L118.6,437.2 L119.6,437.2 L120.6,437.2 L121.7,437.2 L122.8,437.2 L123.9,437.2 L125.0,437.2 L126.1,437.2 L127.2,437.2 L128.3,437.2 L129.5,437.2 L130.6,437.2 L131.7,437.2 L132.8,437.2 L133.8,437.2 L134.9,437.2 L136.0,437.2 L137.0,437.2 L138.0,437.2 L139.0,437.2 L139.9,437.2 L140.8,437.3 L141.7,437.3 L142.5,437.3 L143.8,437.3 L145.1,437.4 L146.3,437.4 L147.5,437.5 L148.6,437.5 L149.6,437.6 L150.7,437.6 L151.6,437.7 L152.6,437.8 L153.5,437.9 L154.4,437.9 L155.4,438.0 L156.3,438.1 L157.2,438.2 L158.1,438.3 L159.0,438.4 L160.0,438.5 L161.1,438.6 L162.2,438.8 L163.2,438.9 L164.2,439.0 L165.2,439.2 L166.2,439.4 L167.2,439.5 L168.2,439.7 L169.2,439.9 L170.3,440.0 L171.3,440.2 L172.4,440.4 L173.4,440.6 L174.6,440.8 L175.7,441.0 L176.6,441.2 L177.6,441.3 L178.6,441.5 L179.6,441.7 L180.6,441.9 L181.6,442.0 L182.6,442.2 L183.7,442.4 L184.7,442.6 L185.8,442.8 L186.8,443.0 L187.9,443.2 L188.9,443.4 L190.0,443.6 L191.0,443.8 L192.0,444.0 L193.0,444.1 L194.0,444.3 L195.0,444.5 L196.1,444.7 L197.1,444.9 L198.1,445.1 L199.1,445.2 L200.0,445.4 L201.0,445.6 L202.0,445.8 L202.9,446.0 L203.9,446.1 L204.8,446.3 L205.8,446.5 L206.9,446.7 L207.9,446.8 L209.0,447.0 L210.2,447.2 L211.4,447.4 L212.6,447.6 L213.5,447.7 L214.4,447.9 L215.4,448.0 L216.3,448.2 L217.3,448.3 L218.4,448.5 L219.4,448.6 L220.5,448.8 L221.5,448.9 L222.6,449.1 L223.7,449.2 L224.8,449.4 L225.9,449.5 L227.0,449.7 L228.1,449.8 L229.2,450.0 L230.3,450.1 L231.4,450.3 L232.5,450.4 L233.5,450.6 L234.6,450.7 L235.6,450.9 L236.6,451.0 L237.6,451.2 L238.5,451.3 L239.7,451.5 L240.8,451.7 L242.0,451.8 L243.2,452.0 L244.4,452.2 L245.5,452.4 L246.7,452.6 L247.8,452.7 L249.0,452.9 L250.1,453.1 L251.1,453.3 L252.2,453.5 L253.2,453.6 L254.1,453.8 L255.1,453.9 L255.9,454.1 L256.7,454.2 L257.5,454.4 L258.2,454.5 L258.8,454.6 L261.3,455.2 L261.8,455.6 L262.0,455.8 L262.0,517.7 Z" fill="#c8e0be"/>
<path d="M207.8,517.7 L207.8,517.7 L208.8,516.5 L209.8,515.4 L210.8,514.2 L211.8,513.0 L212.8,511.9 L213.7,510.7 L214.7,509.5 L215.7,508.4 L216.7,507.2 L217.7,506.1 L218.7,504.9 L219.7,503.7 L220.7,502.6 L221.7,501.4 L222.7,500.2 L223.6,499.1 L224.6,497.9 L225.6,496.7 L226.6,495.6 L227.6,494.4 L228.6,493.2 L229.6,492.1 L230.6,490.9 L231.6,489.8 L232.6,488.6 L233.5,487.4 L234.5,486.3 L235.5,485.1 L236.5,483.9 L237.5,482.8 L238.5,481.6 L239.5,480.2 L240.5,478.9 L241.5,477.6 L242.6,476.2 L243.6,474.9 L244.6,473.5 L245.6,472.2 L246.6,470.8 L247.6,469.5 L248.7,468.1 L249.7,466.8 L250.7,465.4 L251.7,464.1 L252.7,462.7 L253.7,461.4 L254.7,460.0 L255.8,458.7 L256.8,457.3 L257.8,456.0 L258.8,454.6 L259.4,453.9 L260.0,453.0 L260.8,452.0 L261.7,450.9 L262.6,449.6 L263.6,448.3 L264.6,446.9 L265.7,445.5 L266.9,444.0 L268.0,442.5 L269.2,441.0 L270.5,439.4 L271.7,437.9 L272.9,436.4 L274.2,435.0 L275.4,433.6 L276.3,432.6 L277.2,431.6 L278.2,430.6 L279.2,429.6 L280.2,428.6 L281.3,427.6 L282.3,426.6 L283.4,425.5 L284.5,424.5 L285.5,423.5 L286.6,422.5 L287.7,421.4 L288.8,420.4 L289.8,419.4 L290.9,418.4 L291.9,417.4 L293.0,416.3 L293.9,415.3 L294.9,414.3 L295.8,413.4 L296.7,412.4 L297.6,411.4 L298.9,409.9 L300.1,408.5 L301.2,407.1 L302.3,405.8 L303.4,404.4 L304.4,403.1 L305.4,401.8 L306.4,400.4 L307.4,399.0 L308.3,397.6 L309.3,396.1 L310.3,394.5 L311.3,392.8 L312.3,391.0 L313.4,389.1 L314.4,387.0 L315.6,384.8 L316.7,382.6 L317.8,380.3 L318.9,377.9 L320.0,375.5 L321.1,373.0 L322.2,370.7 L323.2,368.3 L324.2,366.0 L325.2,363.8 L326.1,361.7 L327.0,359.7 L328.3,356.8 L329.4,354.1 L330.4,351.5 L331.4,349.0 L332.3,346.6 L333.2,344.3 L334.1,342.0 L335.0,339.8 L336.0,337.5 L337.1,335.1 L338.2,332.9 L339.2,330.8 L340.3,328.7 L341.3,326.6 L342.4,324.3 L343.6,321.8 L344.8,319.0 L345.7,316.7 L346.7,314.1 L347.7,311.3 L348.7,308.4 L349.8,305.4 L350.8,302.4 L351.8,299.5 L352.9,296.6 L353.9,294.0 L354.9,291.6 L355.8,289.5 L356.9,287.3 L357.8,285.3 L358.7,283.5 L359.6,281.9 L360.5,280.5 L361.4,279.3 L362.5,278.3 L363.7,277.4 L365.0,276.6 L365.9,276.2 L366.8,275.9 L367.8,275.6 L368.9,275.4 L370.0,275.3 L371.1,275.2 L372.3,275.1 L373.5,275.1 L374.6,275.1 L375.8,275.2 L376.9,275.3 L378.0,275.5 L379.0,275.7 L380.0,276.0 L380.9,276.3 L381.7,276.6 L383.2,277.5 L384.4,278.7 L385.4,280.1 L386.2,281.7 L387.0,283.5 L387.9,285.5 L389.0,287.7 L390.0,289.7 L391.0,292.0 L392.1,294.6 L393.2,297.3 L394.3,300.0 L395.4,302.5 L396.4,304.8 L397.4,306.7 L398.3,308.0 L399.6,309.2 L400.8,309.2 L401.8,308.4 L402.8,307.3 L403.9,306.0 L404.9,304.5 L406.0,302.4 L407.0,300.0 L408.2,297.9 L409.3,296.5 L410.5,296.2 L411.4,296.9 L412.4,298.3 L413.4,300.2 L414.4,302.4 L415.5,304.8 L416.5,307.3 L417.6,309.6 L418.6,311.7 L419.6,313.7 L420.6,315.8 L421.6,318.0 L422.6,320.1 L423.6,322.1 L424.6,323.9 L425.7,325.4 L426.8,326.5 L427.8,327.1 L428.8,327.6 L429.8,327.9 L430.9,328.1 L432.0,328.1 L433.1,328.0 L434.2,327.8 L435.2,327.4 L436.2,327.0 L437.1,326.5 L438.3,325.5 L439.4,324.2 L440.5,322.7 L441.5,321.0 L442.5,319.2 L443.5,317.3 L444.5,315.4 L445.6,312.7 L446.8,309.3 L447.9,305.8 L449.0,302.8 L450.0,300.9 L451.1,300.6 L452.2,302.5 L453.3,306.1 L454.4,310.8 L455.4,315.8 L456.4,320.7 L457.4,324.6 L458.8,329.3 L460.0,333.5 L461.2,336.9 L462.2,339.4 L463.3,341.6 L464.7,340.0 L465.5,338.4 L466.4,336.1 L467.4,333.4 L468.5,330.5 L469.6,327.8 L470.7,325.4 L471.7,323.6 L472.7,322.6 L473.7,322.2 L474.7,322.1 L475.8,322.2 L476.8,322.2 L477.8,322.0 L478.8,321.3 L479.8,320.2 L480.8,318.8 L481.8,317.1 L482.8,315.4 L483.8,313.5 L484.8,311.5 L485.8,309.5 L486.8,307.3 L487.8,304.9 L488.8,302.4 L489.8,299.9 L490.8,297.4 L491.8,295.1 L492.8,293.1 L493.8,291.2 L494.8,289.3 L495.8,287.5 L496.8,285.9 L497.8,284.7 L498.8,284.0 L499.8,283.8 L500.8,284.3 L501.9,285.5 L503.0,287.1 L504.0,289.1 L505.0,291.3 L506.0,293.4 L506.9,295.5 L508.2,299.4 L509.3,303.9 L510.3,308.1 L511.6,311.0 L512.5,311.9 L513.4,312.2 L514.4,312.2 L515.5,312.0 L516.5,311.8 L517.6,311.7 L518.6,311.9 L519.6,312.3 L520.6,312.7 L521.5,313.2 L522.5,313.8 L523.5,314.5 L524.5,315.5 L525.6,316.6 L526.6,318.1 L527.6,320.2 L528.7,322.6 L529.7,325.0 L530.8,327.2 L531.9,328.9 L533.0,329.8 L534.0,329.7 L535.0,328.1 L536.1,325.1 L537.2,321.2 L538.2,316.8 L539.3,312.5 L540.2,308.8 L541.2,306.1 L542.0,304.9 L543.4,307.1 L544.5,313.0 L545.5,320.1 L546.7,326.0 L547.8,329.9 L548.8,334.0 L550.0,337.6 L551.2,339.9 L552.4,340.0 L553.3,338.0 L554.3,334.2 L555.4,329.3 L556.4,324.1 L557.4,319.3 L558.4,315.8 L559.4,314.2 L560.5,315.3 L561.6,318.7 L562.6,323.4 L563.6,328.4 L564.6,332.7 L565.5,335.3 L566.7,336.3 L567.9,335.4 L569.0,333.4 L570.2,330.6 L571.2,328.2 L572.2,325.1 L573.3,321.5 L574.3,318.0 L575.3,314.6 L576.3,311.9 L577.6,308.5 L578.8,305.6 L580.0,303.5 L581.0,302.5 L582.2,303.8 L583.3,306.9 L584.0,309.3 L584.0,517.7 Z" fill="#e0bac6"/><path d="M603,517.7V244.1H604V239.5H605V234.3H606V234.4H607V226.8H608V222.2H609V219.1H610V222.5H611V214.5H612V213.1H613V212.9H614V209.3H615V210.8H616V210.4H617V206.4H618V207.1H619V209.1H620V208.1H621V205.3H622V214.0H623V204.9H624V204.8H625V207.7H626V205.7H627V206.1H628V208.5H629V207.9H630V215.3H631V218.5H632V207.4H633V212.6H634V214.0H635V209.4H636V211.5H637V220.0H638V217.5H639V198.7H640V208.4H641V230.2H642V212.5H643V214.7H644V213.6H645V216.6H646V219.8H647V225.8H648V213.9H649V215.7H650V218.0H651V228.6H652V232.9H653V238.7H654V239.8H655V250.2H656V247.4H657V250.4H658V517.7Z" fill="#e0bac6"/><path d="M1236.0,517.7 L1236.0,500.0 L1238.4,496.0 L1242.3,506.2 L1246.1,513.9 L1247.4,517.7 L1247.4,517.7 Z" fill="#e0bac6"/>
<path d="M655,517.7V242.1H656V248.6H657V254.3H658V232.4H659V237.7H660V239.4H661V230.6H662V233.4H663V228.3H664V234.7H665V227.2H666V232.4H667V228.8H668V227.8H669V230.5H670V230.2H671V232.7H672V247.3H673V234.7H674V245.1H675V256.8H676V267.7H677V266.5H678V255.1H679V239.5H680V228.9H681V230.8H682V236.4H683V238.3H684V241.0H685V238.7H686V225.5H687V224.4H688V214.2H689V211.6H690V212.0H691V218.0H692V207.6H693V207.2H694V212.6H695V218.3H696V205.4H697V218.7H698V202.4H699V205.9H700V206.3H701V208.2H702V207.6H703V207.7H704V214.9H705V215.7H706V215.2H707V220.4H708V218.7H709V218.9H710V215.0H711V209.5H712V211.0H713V220.3H714V208.5H715V214.0H716V213.4H717V213.5H718V207.9H719V206.3H720V208.0H721V207.8H722V215.0H723V205.6H724V215.5H725V211.4H726V215.3H727V217.2H728V219.5H729V226.2H730V238.0H731V228.3H732V228.8H733V230.7H734V237.4H735V232.0H736V245.8H737V236.4H738V233.7H739V234.6H740V240.1H741V239.0H742V243.7H743V245.4H744V246.9H745V243.8H746V242.2H747V241.5H748V236.4H749V234.0H750V234.0H751V228.0H752V226.8H753V227.3H754V224.1H755V246.3H756V235.8H757V240.6H758V249.8H759V259.2H760V252.8H761V247.6H762V242.5H763V244.3H764V221.0H765V221.4H766V228.9H767V227.9H768V229.0H769V224.9H770V233.9H771V229.2H772V232.0H773V221.6H774V223.2H775V218.2H776V212.0H777V208.4H778V206.5H779V219.5H780V205.7H781V199.2H782V213.7H783V203.2H784V197.3H785V197.1H786V193.2H787V194.8H788V198.3H789V202.8H790V204.6H791V205.7H792V214.8H793V205.1H794V214.3H795V207.7H796V209.8H797V221.5H798V210.1H799V208.7H800V221.5H801V214.4H802V239.1H803V233.6H804V269.1H805V244.5H806V236.5H807V231.4H808V232.0H809V225.5H810V237.6H811V238.5H812V239.3H813V251.7H814V286.3H815V279.8H816V285.1H817V282.6H818V266.1H819V256.7H820V250.2H821V249.9H822V247.4H823V251.7H824V258.6H825V258.4H826V263.0H827V254.9H828V257.4H829V255.8H830V255.0H831V254.1H832V260.6H833V254.8H834V248.9H835V247.6H836V248.9H837V245.9H838V258.3H839V265.6H840V277.8H841V274.1H842V278.2H843V272.9H844V268.5H845V276.4H846V268.8H847V265.6H848V266.5H849V266.1H850V263.2H851V280.4H852V261.0H853V262.2H854V260.9H855V260.3H856V272.7H857V278.7H858V277.8H859V276.6H860V276.5H861V279.1H862V285.6H863V286.1H864V287.7H865V295.5H866V294.9H867V299.7H868V305.8H869V315.1H870V327.4H871V340.3H872V355.6H873V352.6H874V348.0H875V349.7H876V330.4H877V330.0H878V336.6H879V317.6H880V316.6H881V301.4H882V295.1H883V290.4H884V281.7H885V284.9H886V288.2H887V286.5H888V293.9H889V291.1H890V283.2H891V277.2H892V276.4H893V282.0H894V261.4H895V261.9H896V263.7H897V263.8H898V258.2H899V255.1H900V263.1H901V272.3H902V261.3H903V266.3H904V280.2H905V271.0H906V266.4H907V266.7H908V274.7H909V264.7H910V282.5H911V280.4H912V285.0H913V288.5H914V289.3H915V313.4H916V317.5H917V334.0H918V343.9H919V336.3H920V326.8H921V332.8H922V311.7H923V303.3H924V301.0H925V301.3H926V310.7H927V309.8H928V311.3H929V314.4H930V330.5H931V309.9H932V310.7H933V312.5H934V312.2H935V305.4H936V306.7H937V321.2H938V329.8H939V337.5H940V352.7H941V357.9H942V363.2H943V361.3H944V351.5H945V349.3H946V335.5H947V328.1H948V326.4H949V323.1H950V322.7H951V324.5H952V325.1H953V330.6H954V327.4H955V330.5H956V329.8H957V337.6H958V336.8H959V343.4H960V352.0H961V353.0H962V362.9H963V358.1H964V376.4H965V368.2H966V376.2H967V376.2H968V389.9H969V377.8H970V370.2H971V368.5H972V364.1H973V351.5H974V357.9H975V375.8H976V406.1H977V399.8H978V410.1H979V412.4H980V395.4H981V390.5H982V388.2H983V382.6H984V368.0H985V361.5H986V365.5H987V368.2H988V358.3H989V360.7H990V356.9H991V355.8H992V350.7H993V348.4H994V349.7H995V347.6H996V336.4H997V347.3H998V339.7H999V339.5H1000V324.1H1001V327.7H1002V328.5H1003V334.0H1004V340.6H1005V342.9H1006V343.2H1007V347.5H1008V339.7H1009V341.6H1010V351.4H1011V339.5H1012V335.5H1013V343.4H1014V337.3H1015V340.2H1016V346.2H1017V346.4H1018V350.7H1019V355.0H1020V364.6H1021V359.1H1022V362.8H1023V369.8H1024V374.1H1025V385.8H1026V376.5H1027V374.1H1028V377.2H1029V377.9H1030V373.3H1031V371.2H1032V378.2H1033V374.8H1034V370.8H1035V386.0H1036V372.6H1037V378.8H1038V375.5H1039V380.0H1040V386.5H1041V395.1H1042V383.3H1043V376.1H1044V367.7H1045V364.5H1046V362.6H1047V363.6H1048V357.9H1049V355.7H1050V357.4H1051V363.1H1052V352.6H1053V354.6H1054V356.4H1055V354.5H1056V364.6H1057V353.9H1058V361.4H1059V357.3H1060V360.0H1061V382.6H1062V362.0H1063V364.1H1064V367.8H1065V366.7H1066V371.2H1067V388.2H1068V381.8H1069V380.6H1070V378.0H1071V380.7H1072V393.0H1073V391.0H1074V404.1H1075V407.8H1076V413.0H1077V419.5H1078V429.7H1079V422.2H1080V424.1H1081V411.5H1082V408.5H1083V410.0H1084V411.0H1085V418.8H1086V416.9H1087V415.3H1088V405.7H1089V402.0H1090V392.3H1091V391.9H1092V384.5H1093V385.2H1094V388.8H1095V379.7H1096V377.9H1097V377.9H1098V389.7H1099V395.0H1100V402.1H1101V404.1H1102V397.0H1103V396.8H1104V403.5H1105V410.9H1106V399.5H1107V398.6H1108V409.4H1109V427.8H1110V449.7H1111V464.5H1112V430.3H1113V420.7H1114V411.6H1115V407.7H1116V401.7H1117V394.8H1118V395.6H1119V386.2H1120V387.3H1121V387.5H1122V399.0H1123V394.3H1124V401.9H1125V393.4H1126V400.6H1127V399.3H1128V400.8H1129V398.1H1130V394.5H1131V385.3H1132V390.9H1133V397.1H1134V404.9H1135V409.3H1136V418.4H1137V399.1H1138V387.6H1139V386.4H1140V389.8H1141V379.7H1142V378.2H1143V393.0H1144V396.4H1145V392.4H1146V391.0H1147V396.3H1148V399.9H1149V395.6H1150V415.7H1151V420.6H1152V427.7H1153V436.5H1154V427.6H1155V410.6H1156V389.8H1157V386.9H1158V396.3H1159V396.1H1160V391.9H1161V388.8H1162V393.4H1163V398.1H1164V385.6H1165V387.3H1166V391.3H1167V397.6H1168V397.7H1169V400.0H1170V397.4H1171V396.7H1172V390.5H1173V388.8H1174V391.3H1175V384.8H1176V389.2H1177V378.6H1178V376.8H1179V382.2H1180V384.6H1181V385.4H1182V398.2H1183V390.8H1184V388.8H1185V388.3H1186V386.2H1187V384.3H1188V384.6H1189V388.3H1190V389.2H1191V392.5H1192V391.4H1193V396.0H1194V396.2H1195V398.0H1196V397.4H1197V394.2H1198V397.5H1199V395.6H1200V400.4H1201V402.7H1202V407.9H1203V410.8H1204V414.6H1205V431.2H1206V414.8H1207V415.8H1208V417.6H1209V419.8H1210V438.4H1211V426.9H1212V434.7H1213V435.5H1214V433.5H1215V439.3H1216V440.6H1217V453.7H1218V449.3H1219V450.6H1220V452.5H1221V450.0H1222V464.0H1223V464.3H1224V469.8H1225V464.5H1226V468.5H1227V473.4H1228V477.8H1229V487.2H1230V480.8H1231V492.3H1232V497.8H1233V491.5H1234V492.2H1235V500.5H1236V499.8H1237V509.6H1238V509.3H1239V515.7H1240V517.7Z" fill="#c8e0be"/>
<path d="M207.8,517.7 L207.8,517.7 L208.8,516.5 L209.8,515.4 L210.8,514.2 L211.8,513.0 L212.8,511.9 L213.7,510.7 L214.7,509.5 L215.7,508.4 L216.7,507.2 L217.7,506.1 L218.7,504.9 L219.7,503.7 L220.7,502.6 L221.7,501.4 L222.7,500.2 L223.6,499.1 L224.6,497.9 L225.6,496.7 L226.6,495.6 L227.6,494.4 L228.6,493.2 L229.6,492.1 L230.6,490.9 L231.6,489.8 L232.6,488.6 L233.5,487.4 L234.5,486.3 L235.5,485.1 L236.5,483.9 L237.5,482.8 L238.5,481.6 L239.5,480.2 L240.5,478.9 L241.5,477.6 L242.6,476.2 L243.6,474.9 L244.6,473.5 L245.6,472.2 L246.6,470.8 L247.6,469.5 L248.7,468.1 L249.7,466.8 L250.7,465.4 L251.7,464.1 L252.7,462.7 L253.7,461.4 L254.7,460.0 L255.8,458.7 L256.8,457.3 L257.8,456.0 L258.8,454.6 L259.3,454.8 L260.0,455.0 L260.6,455.2 L261.4,455.5 L262.2,455.7 L263.0,456.0 L263.9,456.3 L264.9,456.6 L265.9,457.0 L266.9,457.3 L268.0,457.6 L269.1,458.0 L270.2,458.4 L271.4,458.8 L272.5,459.1 L273.7,459.5 L274.9,459.9 L276.1,460.3 L277.3,460.7 L278.5,461.1 L279.7,461.5 L280.8,461.9 L282.0,462.3 L283.1,462.7 L284.2,463.0 L285.3,463.4 L286.4,463.7 L287.4,464.1 L288.4,464.4 L289.3,464.7 L290.2,465.0 L291.4,465.4 L292.6,465.8 L293.7,466.1 L294.8,466.5 L295.8,466.8 L296.9,467.1 L297.9,467.4 L298.9,467.7 L299.8,468.0 L300.8,468.3 L301.7,468.6 L302.7,468.9 L303.6,469.2 L304.5,469.5 L305.5,469.8 L306.4,470.1 L307.4,470.4 L308.3,470.8 L309.3,471.1 L310.3,471.5 L311.3,471.9 L312.3,472.3 L313.3,472.7 L314.3,473.2 L315.4,473.7 L316.5,474.2 L317.6,474.7 L318.7,475.3 L319.8,475.8 L320.9,476.4 L322.0,477.0 L323.1,477.6 L324.2,478.2 L325.3,478.8 L326.4,479.3 L327.5,479.9 L328.5,480.4 L329.6,480.9 L330.6,481.4 L331.6,481.8 L332.5,482.2 L333.4,482.6 L334.3,482.9 L335.2,483.2 L336.0,483.4 L337.4,483.6 L338.7,483.7 L339.9,483.6 L341.1,483.4 L342.1,483.0 L343.0,482.6 L344.0,482.2 L344.9,481.8 L345.7,481.4 L346.6,481.1 L347.5,480.9 L348.5,480.8 L349.6,480.8 L350.6,480.9 L351.6,481.1 L352.6,481.2 L353.6,481.5 L354.6,481.7 L355.6,482.0 L356.5,482.3 L357.5,482.7 L358.5,483.0 L359.5,483.4 L360.5,483.9 L361.5,484.5 L362.4,485.2 L363.4,486.0 L364.3,486.8 L365.3,487.5 L366.3,488.2 L367.3,488.7 L368.4,489.1 L369.5,489.2 L370.6,489.0 L371.6,488.6 L372.6,487.9 L373.6,487.0 L374.7,485.9 L375.8,484.7 L377.0,483.5 L378.1,482.2 L379.3,480.9 L380.4,479.6 L381.5,478.5 L382.5,477.5 L383.5,476.8 L384.5,476.2 L385.4,476.0 L386.7,476.1 L387.8,476.7 L388.9,477.7 L389.9,479.0 L390.9,480.5 L391.8,482.1 L392.7,483.8 L393.7,485.5 L394.6,487.1 L395.7,489.1 L396.7,491.5 L397.8,494.1 L398.8,496.8 L399.8,499.3 L400.8,501.4 L401.8,502.9 L402.7,503.7 L403.9,503.4 L405.0,501.8 L406.1,499.4 L407.2,496.8 L408.3,494.3 L409.4,492.6 L410.4,491.6 L411.3,490.6 L412.2,489.8 L413.2,489.1 L414.3,488.7 L415.4,488.7 L416.8,489.0 L417.7,489.5 L418.7,490.2 L419.7,491.2 L420.8,492.4 L421.9,493.7 L423.0,495.0 L424.2,496.2 L425.3,497.4 L426.5,498.5 L427.6,499.3 L428.7,499.8 L429.7,500.0 L430.8,499.8 L431.9,499.4 L432.9,498.7 L433.9,497.8 L435.0,496.7 L436.0,495.5 L437.0,494.2 L438.0,492.9 L438.9,491.5 L439.9,490.2 L440.8,489.0 L441.9,487.4 L443.0,485.4 L444.0,483.3 L445.0,481.1 L446.0,479.0 L447.0,477.1 L448.0,475.6 L449.0,474.6 L450.0,474.2 L451.1,474.6 L452.2,475.9 L453.4,477.6 L454.5,479.8 L455.7,482.1 L456.8,484.3 L457.7,486.4 L458.5,488.0 L459.2,489.0 L460.0,485.4 L460.6,484.1 L461.3,482.7 L462.1,481.0 L463.1,479.1 L464.1,477.1 L465.1,475.0 L466.2,472.8 L467.4,470.6 L468.5,468.3 L469.7,466.0 L470.8,463.7 L472.0,461.4 L473.1,459.3 L474.1,457.2 L475.1,455.2 L476.2,453.1 L477.2,451.0 L478.3,449.0 L479.4,446.9 L480.5,444.8 L481.5,442.7 L482.6,440.6 L483.6,438.6 L484.6,436.6 L485.6,434.7 L486.5,432.7 L487.3,430.9 L488.1,429.1 L489.5,425.6 L490.7,422.2 L491.7,419.0 L492.6,415.9 L493.4,413.0 L494.3,410.3 L495.2,408.0 L496.2,405.5 L497.2,403.2 L498.1,401.2 L499.0,399.7 L500.1,398.8 L501.3,398.6 L502.2,399.0 L503.1,399.9 L504.1,401.2 L505.2,402.8 L506.3,404.4 L507.4,406.1 L508.5,407.7 L509.5,409.0 L510.6,409.9 L511.6,410.3 L512.7,410.2 L513.7,409.5 L514.8,408.5 L515.8,407.2 L516.8,405.8 L517.8,404.4 L518.8,403.0 L519.9,401.8 L520.9,401.0 L522.0,400.5 L523.0,400.3 L524.1,400.2 L525.2,400.2 L526.3,400.2 L527.3,400.2 L528.4,399.9 L529.4,399.4 L530.3,398.6 L531.4,397.1 L532.5,395.1 L533.6,392.9 L534.5,390.5 L535.5,387.8 L536.5,385.0 L537.4,382.2 L538.5,378.3 L539.5,373.5 L540.5,368.6 L541.5,364.1 L542.5,360.6 L543.5,358.8 L544.7,359.5 L545.8,362.6 L546.9,366.7 L548.0,370.6 L549.1,372.8 L550.3,373.5 L551.5,373.1 L552.6,371.4 L553.8,368.2 L554.8,363.5 L555.8,357.0 L556.9,350.0 L558.1,343.9 L559.4,340.0 L560.3,339.2 L561.3,339.5 L562.4,340.5 L563.5,341.9 L564.6,343.4 L565.7,344.6 L566.8,345.1 L567.8,344.7 L568.9,342.9 L570.0,340.2 L571.0,336.9 L572.1,333.2 L573.1,329.6 L574.0,326.3 L574.9,323.6 L576.1,320.7 L577.1,318.4 L578.1,316.4 L579.1,314.8 L580.0,313.3 L581.1,312.1 L582.0,311.7 L583.0,311.0 L584,311.0 V307.7H585V304.5H586V301.4H587V298.2H588V295.0H589V289.4H590V281.5H591V277.3H592V277.0H593V276.7H594V264.9H595V241.7H596V239.4H597V234.5H598V228.2H599V231.7H600V233.9H601V235.9H602V247.1H603V247.5H604V237.9H605V228.1H606V235.4H607V228.6H608V233.3H609V220.8H610V220.1H611V232.6H612V215.7H613V214.8H614V215.7H615V216.1H616V223.4H617V235.6H618V218.3H619V228.0H620V220.1H621V216.9H622V228.0H623V215.6H624V217.1H625V215.0H626V218.4H627V218.3H628V220.6H629V220.5H630V223.9H631V227.8H632V223.1H633V225.0H634V227.8H635V235.7H636V248.2H637V252.8H638V233.5H639V222.5H640V219.2H641V234.0H642V239.8H643V251.1H644V242.2H645V237.2H646V256.8H647V237.6H648V229.8H649V232.6H650V228.4H651V234.4H652V244.5H653V235.4H654V237.0H655V245.1H656V253.6H657V254.3H658V242.0H659V240.9H660V247.9H661V245.9H662V252.0H663V256.3H664V244.3H665V252.8H666V248.0H667V250.1H668V255.4H669V250.2H670V260.3H671V253.9H672V264.0H673V258.8H674V263.5H675V263.5H676V267.7H677V266.5H678V263.6H679V258.1H680V265.1H681V261.9H682V259.3H683V261.9H684V272.5H685V261.5H686V262.3H687V254.5H688V243.2H689V245.8H690V244.6H691V249.9H692V246.8H693V235.5H694V237.9H695V231.5H696V233.0H697V231.0H698V226.3H699V229.1H700V229.0H701V227.7H702V236.2H703V238.2H704V231.8H705V234.9H706V243.4H707V245.4H708V235.0H709V230.2H710V234.0H711V221.5H712V217.2H713V220.3H714V216.4H715V222.4H716V228.7H717V219.6H718V233.5H719V229.7H720V223.7H721V207.8H722V215.0H723V205.6H724V215.5H725V211.4H726V224.7H727V228.7H728V235.8H729V247.6H730V255.9H731V255.9H732V246.0H733V250.9H734V263.0H735V248.6H736V245.8H737V256.6H738V254.7H739V254.4H740V253.4H741V259.7H742V253.7H743V248.2H744V246.9H745V246.2H746V244.0H747V242.9H748V248.0H749V254.5H750V258.9H751V240.4H752V242.8H753V242.3H754V262.4H755V247.2H756V251.1H757V251.5H758V258.2H759V259.2H760V268.3H761V255.6H762V251.3H763V247.5H764V245.7H765V243.2H766V239.8H767V240.6H768V247.0H769V245.3H770V245.5H771V247.3H772V252.5H773V247.7H774V243.5H775V241.8H776V237.7H777V236.4H778V230.8H779V227.3H780V234.2H781V220.5H782V215.1H783V213.7H784V214.7H785V217.8H786V214.6H787V217.3H788V221.7H789V221.5H790V236.1H791V227.6H792V246.0H793V233.2H794V236.6H795V242.5H796V238.9H797V242.2H798V242.8H799V242.5H800V250.5H801V267.7H802V253.0H803V250.6H804V269.1H805V257.6H806V249.1H807V250.6H808V252.6H809V254.1H810V265.4H811V268.1H812V280.4H813V282.8H814V286.3H815V279.8H816V285.1H817V282.6H818V270.2H819V272.5H820V275.9H821V270.0H822V269.3H823V271.2H824V274.1H825V274.6H826V282.0H827V285.8H828V280.9H829V282.3H830V282.4H831V278.0H832V274.8H833V274.8H834V276.0H835V269.9H836V270.1H837V277.0H838V289.4H839V297.7H840V285.0H841V304.1H842V293.8H843V294.8H844V297.3H845V292.1H846V310.1H847V299.8H848V292.8H849V306.0H850V287.1H851V292.1H852V293.4H853V297.7H854V283.4H855V286.3H856V288.2H857V291.7H858V294.2H859V297.0H860V300.8H861V308.8H862V306.2H863V320.3H864V343.6H865V330.8H866V331.9H867V342.0H868V343.1H869V345.0H870V344.7H871V349.3H872V355.6H873V352.6H874V352.7H875V349.7H876V346.9H877V357.9H878V337.8H879V329.1H880V327.7H881V311.5H882V301.0H883V300.6H884V306.6H885V306.0H886V305.4H887V307.4H888V305.2H889V304.5H890V298.6H891V300.2H892V289.7H893V284.8H894V281.8H895V279.6H896V286.5H897V280.2H898V280.7H899V281.6H900V285.4H901V284.0H902V288.9H903V284.1H904V284.8H905V289.7H906V300.6H907V297.3H908V301.3H909V304.7H910V309.2H911V322.7H912V305.3H913V317.3H914V304.0H915V319.1H916V328.7H917V337.3H918V353.5H919V348.6H920V337.7H921V332.8H922V325.9H923V324.7H924V324.6H925V329.4H926V327.6H927V341.1H928V337.9H929V335.1H930V338.9H931V335.1H932V336.6H933V338.4H934V336.8H935V339.6H936V343.4H937V343.2H938V343.6H939V349.3H940V362.6H941V361.6H942V367.0H943V368.0H944V363.5H945V364.7H946V355.8H947V352.1H948V347.1H949V360.1H950V343.5H951V347.9H952V350.3H953V348.0H954V351.0H955V352.9H956V352.4H957V365.6H958V359.1H959V364.5H960V364.3H961V368.6H962V378.8H963V380.0H964V390.6H965V388.5H966V383.7H967V381.6H968V389.9H969V383.7H970V384.6H971V377.1H972V373.5H973V381.7H974V383.6H975V415.3H976V418.6H977V431.8H978V440.3H979V437.8H980V428.8H981V417.4H982V417.8H983V399.5H984V399.9H985V386.9H986V388.4H987V387.6H988V380.7H989V379.7H990V378.5H991V376.0H992V372.8H993V376.8H994V373.5H995V365.9H996V363.8H997V362.7H998V358.3H999V358.0H1000V356.0H1001V362.9H1002V357.5H1003V357.4H1004V357.3H1005V363.0H1006V363.4H1007V358.4H1008V365.6H1009V357.4H1010V357.5H1011V366.5H1012V363.1H1013V357.0H1014V361.6H1015V368.0H1016V358.8H1017V363.7H1018V362.0H1019V372.7H1020V368.4H1021V369.4H1022V394.7H1023V389.6H1024V390.5H1025V396.1H1026V402.8H1027V420.5H1028V412.0H1029V408.0H1030V408.0H1031V404.5H1032V408.9H1033V411.9H1034V407.8H1035V411.0H1036V395.6H1037V394.0H1038V391.5H1039V396.3H1040V393.1H1041V395.1H1042V383.3H1043V376.1H1044V373.2H1045V381.6H1046V380.7H1047V364.3H1048V365.6H1049V360.8H1050V362.8H1051V363.1H1052V356.0H1053V354.7H1054V356.4H1055V375.6H1056V364.6H1057V359.3H1058V369.2H1059V366.9H1060V366.5H1061V382.6H1062V376.2H1063V378.5H1064V374.4H1065V393.4H1066V374.6H1067V388.2H1068V382.2H1069V384.8H1070V389.9H1071V395.6H1072V397.1H1073V402.6H1074V407.9H1075V417.5H1076V431.9H1077V434.2H1078V439.6H1079V433.9H1080V429.4H1081V430.0H1082V423.1H1083V420.2H1084V419.8H1085V423.4H1086V427.4H1087V426.0H1088V405.7H1089V411.7H1090V403.5H1091V401.5H1092V420.1H1093V391.8H1094V388.8H1095V379.7H1096V382.1H1097V383.4H1098V393.5H1099V412.2H1100V417.7H1101V423.0H1102V427.9H1103V430.2H1104V425.1H1105V427.0H1106V426.2H1107V429.5H1108V436.0H1109V462.5H1110V453.7H1111V464.5H1112V439.2H1113V427.4H1114V430.0H1115V418.0H1116V409.5H1117V411.0H1118V401.0H1119V390.7H1120V390.7H1121V390.0H1122V399.0H1123V394.6H1124V401.9H1125V400.4H1126V402.7H1127V413.4H1128V400.8H1129V398.1H1130V403.8H1131V391.8H1132V414.3H1133V422.6H1134V428.5H1135V410.9H1136V418.4H1137V404.6H1138V389.0H1139V391.4H1140V389.8H1141V389.1H1142V396.6H1143V402.9H1144V403.9H1145V409.4H1146V416.1H1147V414.7H1148V422.5H1149V441.0H1150V430.6H1151V443.3H1152V440.7H1153V436.8H1154V435.6H1155V421.3H1156V412.1H1157V425.6H1158V413.3H1159V416.2H1160V435.4H1161V433.1H1162V435.7H1163V431.2H1164V423.6H1165V426.5H1166V418.6H1167V417.3H1168V422.6H1169V428.8H1170V429.1H1171V434.0H1172V439.5H1173V447.9H1174V430.2H1175V422.6H1176V417.5H1177V421.2H1178V415.6H1179V428.9H1180V428.5H1181V432.5H1182V438.0H1183V438.8H1184V432.8H1185V432.4H1186V427.4H1187V427.8H1188V425.1H1189V425.8H1190V427.6H1191V433.7H1192V437.8H1193V427.0H1194V427.2H1195V427.8H1196V430.1H1197V431.0H1198V430.4H1199V435.4H1200V439.1H1201V442.8H1202V445.9H1203V453.9H1204V453.4H1205V447.3H1206V448.4H1207V449.5H1208V465.8H1209V467.3H1210V466.4H1211V470.7H1212V475.3H1213V490.0H1214V486.7H1215V501.8H1216V505.9H1217V500.6H1218V503.7H1219V502.0H1220V503.6H1221V501.3H1222V504.4H1223V501.7H1224V498.9H1225V499.3H1226V512.5H1227V511.1H1228V500.9H1229V497.8H1230V492.4H1231V494.4H1232V497.8H1233V497.7H1234V496.3H1235V504.5H1236V505.5H1237V509.6H1238V516.4H1239V517.5H1240V517.7Z" fill="#9c8e54"/>
<g clip-path="url(#cg)"><rect x="77.5" y="208" width="1194.0" height="1" fill="#dcdcd8"/><rect x="77.5" y="226" width="1194.0" height="1" fill="#dcdcd8"/><rect x="77.5" y="243" width="1194.0" height="1" fill="#dcdcd8"/><rect x="77.5" y="260" width="1194.0" height="1" fill="#dcdcd8"/><rect x="77.5" y="277" width="1194.0" height="1" fill="#dcdcd8"/><rect x="77.5" y="294" width="1194.0" height="1" fill="#dcdcd8"/><rect x="77.5" y="311" width="1194.0" height="1" fill="#dcdcd8"/><rect x="77.5" y="328" width="1194.0" height="1" fill="#dcdcd8"/><rect x="77.5" y="346" width="1194.0" height="1" fill="#dcdcd8"/><rect x="77.5" y="363" width="1194.0" height="1" fill="#dcdcd8"/><rect x="77.5" y="380" width="1194.0" height="1" fill="#dcdcd8"/><rect x="77.5" y="397" width="1194.0" height="1" fill="#dcdcd8"/><rect x="77.5" y="414" width="1194.0" height="1" fill="#dcdcd8"/><rect x="77.5" y="431" width="1194.0" height="1" fill="#dcdcd8"/><rect x="77.5" y="448" width="1194.0" height="1" fill="#dcdcd8"/><rect x="77.5" y="466" width="1194.0" height="1" fill="#dcdcd8"/><rect x="77.5" y="483" width="1194.0" height="1" fill="#dcdcd8"/><rect x="77.5" y="500" width="1194.0" height="1" fill="#dcdcd8"/><rect x="77.5" y="206" width="1194.0" height="1" fill="#90b880"/><rect x="77.5" y="223" width="1194.0" height="1" fill="#90b880"/><rect x="77.5" y="240" width="1194.0" height="1" fill="#90b880"/><rect x="77.5" y="258" width="1194.0" height="1" fill="#90b880"/><rect x="77.5" y="275" width="1194.0" height="1" fill="#90b880"/><rect x="77.5" y="293" width="1194.0" height="1" fill="#90b880"/><rect x="77.5" y="310" width="1194.0" height="1" fill="#90b880"/><rect x="77.5" y="327" width="1194.0" height="1" fill="#90b880"/><rect x="77.5" y="344" width="1194.0" height="1" fill="#90b880"/><rect x="77.5" y="361" width="1194.0" height="1" fill="#90b880"/><rect x="77.5" y="379" width="1194.0" height="1" fill="#90b880"/><rect x="77.5" y="396" width="1194.0" height="1" fill="#90b880"/><rect x="77.5" y="413" width="1194.0" height="1" fill="#90b880"/><rect x="77.5" y="431" width="1194.0" height="1" fill="#90b880"/><rect x="77.5" y="448" width="1194.0" height="1" fill="#90b880"/><rect x="77.5" y="465" width="1194.0" height="1" fill="#90b880"/><rect x="77.5" y="482" width="1194.0" height="1" fill="#90b880"/><rect x="77.5" y="500" width="1194.0" height="1" fill="#90b880"/></g>
<g clip-path="url(#cp)"><rect x="77.5" y="206" width="1194.0" height="1" fill="#dcdad8"/><rect x="77.5" y="223" width="1194.0" height="1" fill="#dcdad8"/><rect x="77.5" y="240" width="1194.0" height="1" fill="#dcdad8"/><rect x="77.5" y="258" width="1194.0" height="1" fill="#dcdad8"/><rect x="77.5" y="275" width="1194.0" height="1" fill="#dcdad8"/><rect x="77.5" y="293" width="1194.0" height="1" fill="#dcdad8"/><rect x="77.5" y="310" width="1194.0" height="1" fill="#dcdad8"/><rect x="77.5" y="327" width="1194.0" height="1" fill="#dcdad8"/><rect x="77.5" y="344" width="1194.0" height="1" fill="#dcdad8"/><rect x="77.5" y="361" width="1194.0" height="1" fill="#dcdad8"/><rect x="77.5" y="379" width="1194.0" height="1" fill="#dcdad8"/><rect x="77.5" y="396" width="1194.0" height="1" fill="#dcdad8"/><rect x="77.5" y="413" width="1194.0" height="1" fill="#dcdad8"/><rect x="77.5" y="431" width="1194.0" height="1" fill="#dcdad8"/><rect x="77.5" y="448" width="1194.0" height="1" fill="#dcdad8"/><rect x="77.5" y="465" width="1194.0" height="1" fill="#dcdad8"/><rect x="77.5" y="482" width="1194.0" height="1" fill="#dcdad8"/><rect x="77.5" y="500" width="1194.0" height="1" fill="#dcdad8"/><rect x="77.5" y="208" width="1194.0" height="1" fill="#b07888"/><rect x="77.5" y="226" width="1194.0" height="1" fill="#b07888"/><rect x="77.5" y="243" width="1194.0" height="1" fill="#b07888"/><rect x="77.5" y="260" width="1194.0" height="1" fill="#b07888"/><rect x="77.5" y="277" width="1194.0" height="1" fill="#b07888"/><rect x="77.5" y="294" width="1194.0" height="1" fill="#b07888"/><rect x="77.5" y="311" width="1194.0" height="1" fill="#b07888"/><rect x="77.5" y="328" width="1194.0" height="1" fill="#b07888"/><rect x="77.5" y="346" width="1194.0" height="1" fill="#b07888"/><rect x="77.5" y="363" width="1194.0" height="1" fill="#b07888"/><rect x="77.5" y="380" width="1194.0" height="1" fill="#b07888"/><rect x="77.5" y="397" width="1194.0" height="1" fill="#b07888"/><rect x="77.5" y="414" width="1194.0" height="1" fill="#b07888"/><rect x="77.5" y="431" width="1194.0" height="1" fill="#b07888"/><rect x="77.5" y="448" width="1194.0" height="1" fill="#b07888"/><rect x="77.5" y="466" width="1194.0" height="1" fill="#b07888"/><rect x="77.5" y="483" width="1194.0" height="1" fill="#b07888"/><rect x="77.5" y="500" width="1194.0" height="1" fill="#b07888"/></g>
<g clip-path="url(#co)"><rect x="77.5" y="206" width="1194.0" height="1" fill="#94b888"/><rect x="77.5" y="223" width="1194.0" height="1" fill="#94b888"/><rect x="77.5" y="240" width="1194.0" height="1" fill="#94b888"/><rect x="77.5" y="258" width="1194.0" height="1" fill="#94b888"/><rect x="77.5" y="275" width="1194.0" height="1" fill="#94b888"/><rect x="77.5" y="293" width="1194.0" height="1" fill="#94b888"/><rect x="77.5" y="310" width="1194.0" height="1" fill="#94b888"/><rect x="77.5" y="327" width="1194.0" height="1" fill="#94b888"/><rect x="77.5" y="344" width="1194.0" height="1" fill="#94b888"/><rect x="77.5" y="361" width="1194.0" height="1" fill="#94b888"/><rect x="77.5" y="379" width="1194.0" height="1" fill="#94b888"/><rect x="77.5" y="396" width="1194.0" height="1" fill="#94b888"/><rect x="77.5" y="413" width="1194.0" height="1" fill="#94b888"/><rect x="77.5" y="431" width="1194.0" height="1" fill="#94b888"/><rect x="77.5" y="448" width="1194.0" height="1" fill="#94b888"/><rect x="77.5" y="465" width="1194.0" height="1" fill="#94b888"/><rect x="77.5" y="482" width="1194.0" height="1" fill="#94b888"/><rect x="77.5" y="500" width="1194.0" height="1" fill="#94b888"/><rect x="77.5" y="208" width="1194.0" height="1" fill="#c890a8"/><rect x="77.5" y="226" width="1194.0" height="1" fill="#c890a8"/><rect x="77.5" y="243" width="1194.0" height="1" fill="#c890a8"/><rect x="77.5" y="260" width="1194.0" height="1" fill="#c890a8"/><rect x="77.5" y="277" width="1194.0" height="1" fill="#c890a8"/><rect x="77.5" y="294" width="1194.0" height="1" fill="#c890a8"/><rect x="77.5" y="311" width="1194.0" height="1" fill="#c890a8"/><rect x="77.5" y="328" width="1194.0" height="1" fill="#c890a8"/><rect x="77.5" y="346" width="1194.0" height="1" fill="#c890a8"/><rect x="77.5" y="363" width="1194.0" height="1" fill="#c890a8"/><rect x="77.5" y="380" width="1194.0" height="1" fill="#c890a8"/><rect x="77.5" y="397" width="1194.0" height="1" fill="#c890a8"/><rect x="77.5" y="414" width="1194.0" height="1" fill="#c890a8"/><rect x="77.5" y="431" width="1194.0" height="1" fill="#c890a8"/><rect x="77.5" y="448" width="1194.0" height="1" fill="#c890a8"/><rect x="77.5" y="466" width="1194.0" height="1" fill="#c890a8"/><rect x="77.5" y="483" width="1194.0" height="1" fill="#c890a8"/><rect x="77.5" y="500" width="1194.0" height="1" fill="#c890a8"/></g>
<rect x="77.5" y="431" width="1194.0" height="1" fill="#b8b8b8"/><rect x="77.5" y="448" width="1194.0" height="1" fill="#b8b8b8"/><rect x="77.5" y="500" width="1194.0" height="1" fill="#b8b8b8"/>
<rect x="127" y="189.5" width="1" height="333.2" fill="#b4b4b4"/>
<rect x="176" y="189.5" width="1" height="333.2" fill="#b4b4b4"/>
<rect x="212" y="189.5" width="1" height="333.2" fill="#b4b4b4"/>
<rect x="239" y="189.5" width="1" height="333.2" fill="#b4b4b4"/>
<rect x="262" y="189.5" width="1" height="333.2" fill="#b4b4b4"/>
<rect x="280" y="189.5" width="1" height="333.2" fill="#b4b4b4"/>
<rect x="297" y="189.5" width="1" height="333.2" fill="#b4b4b4"/>
<rect x="311" y="189.5" width="1" height="333.2" fill="#b4b4b4"/>
<rect x="324" y="189.5" width="1" height="333.2" fill="#8c8c8c"/>
<rect x="409" y="189.5" width="1" height="333.2" fill="#b4b4b4"/>
<rect x="459" y="189.5" width="1" height="333.2" fill="#b4b4b4"/>
<rect x="495" y="189.5" width="1" height="333.2" fill="#b4b4b4"/>
<rect x="522" y="189.5" width="1" height="333.2" fill="#b4b4b4"/>
<rect x="544" y="189.5" width="1" height="333.2" fill="#b4b4b4"/>
<rect x="563" y="189.5" width="1" height="333.2" fill="#b4b4b4"/>
<rect x="580" y="189.5" width="1" height="333.2" fill="#b4b4b4"/>
<rect x="594" y="189.5" width="1" height="333.2" fill="#b4b4b4"/>
<rect x="607" y="189.5" width="1" height="333.2" fill="#8c8c8c"/>
<rect x="692" y="189.5" width="1" height="333.2" fill="#b4b4b4"/>
<rect x="742" y="189.5" width="1" height="333.2" fill="#b4b4b4"/>
<rect x="777" y="189.5" width="1" height="333.2" fill="#b4b4b4"/>
<rect x="805" y="189.5" width="1" height="333.2" fill="#b4b4b4"/>
<rect x="827" y="189.5" width="1" height="333.2" fill="#b4b4b4"/>
<rect x="846" y="189.5" width="1" height="333.2" fill="#b4b4b4"/>
<rect x="862" y="189.5" width="1" height="333.2" fill="#b4b4b4"/>
<rect x="877" y="189.5" width="1" height="333.2" fill="#b4b4b4"/>
<rect x="890" y="189.5" width="1" height="333.2" fill="#8c8c8c"/>
<rect x="975" y="189.5" width="1" height="333.2" fill="#b4b4b4"/>
<rect x="1025" y="189.5" width="1" height="333.2" fill="#b4b4b4"/>
<rect x="1060" y="189.5" width="1" height="333.2" fill="#b4b4b4"/>
<rect x="1088" y="189.5" width="1" height="333.2" fill="#b4b4b4"/>
<rect x="1110" y="189.5" width="1" height="333.2" fill="#b4b4b4"/>
<rect x="1129" y="189.5" width="1" height="333.2" fill="#b4b4b4"/>
<rect x="1145" y="189.5" width="1" height="333.2" fill="#b4b4b4"/>
<rect x="1160" y="189.5" width="1" height="333.2" fill="#b4b4b4"/>
<rect x="1173" y="189.5" width="1" height="333.2" fill="#8c8c8c"/>
<rect x="1258" y="189.5" width="1" height="333.2" fill="#b4b4b4"/>
<rect x="837" y="189.5" width="1" height="328.2" fill="#d4e2cf"/>
<g clip-path="url(#co)"><rect x="837" y="189.5" width="1" height="328.2" fill="#90b880"/></g>
<rect x="1006" y="189.5" width="1" height="328.2" fill="#d4d4d4"/>
<g clip-path="url(#co)"><rect x="1006" y="189.5" width="1" height="328.2" fill="#c890a8"/></g>
<rect x="77.5" y="189.5" width="1194.0" height="328.20000000000005" fill="none" stroke="#111" stroke-width="1.4"/>
<rect x="72.5" y="517.2" width="5" height="1" fill="#333"/>
<rect x="72.5" y="499.5" width="5" height="1" fill="#333"/>
<rect x="72.5" y="481.5" width="5" height="1" fill="#333"/>
<rect x="72.5" y="464.5" width="5" height="1" fill="#333"/>
<rect x="72.5" y="447.5" width="5" height="1" fill="#333"/>
<rect x="72.5" y="430.5" width="5" height="1" fill="#333"/>
<rect x="72.5" y="412.5" width="5" height="1" fill="#333"/>
<rect x="72.5" y="395.5" width="5" height="1" fill="#333"/>
<rect x="72.5" y="378.5" width="5" height="1" fill="#333"/>
<rect x="72.5" y="360.5" width="5" height="1" fill="#333"/>
<rect x="72.5" y="343.5" width="5" height="1" fill="#333"/>
<rect x="72.5" y="326.5" width="5" height="1" fill="#333"/>
<rect x="72.5" y="309.5" width="5" height="1" fill="#333"/>
<rect x="72.5" y="292.5" width="5" height="1" fill="#333"/>
<rect x="72.5" y="274.5" width="5" height="1" fill="#333"/>
<rect x="72.5" y="257.5" width="5" height="1" fill="#333"/>
<rect x="72.5" y="239.5" width="5" height="1" fill="#333"/>
<rect x="72.5" y="222.5" width="5" height="1" fill="#333"/>
<rect x="72.5" y="205.5" width="5" height="1" fill="#333"/>
<rect x="72.5" y="190.5" width="5" height="1" fill="#333"/>
<rect x="72.5" y="482.5" width="5" height="1" fill="#888"/>
<rect x="72.5" y="465.5" width="5" height="1" fill="#888"/>
<rect x="72.5" y="413.5" width="5" height="1" fill="#888"/>
<rect x="72.5" y="396.5" width="5" height="1" fill="#888"/>
<rect x="72.5" y="379.5" width="5" height="1" fill="#888"/>
<rect x="72.5" y="362.5" width="5" height="1" fill="#888"/>
<rect x="72.5" y="345.5" width="5" height="1" fill="#888"/>
<rect x="72.5" y="327.5" width="5" height="1" fill="#888"/>
<rect x="72.5" y="310.5" width="5" height="1" fill="#888"/>
<rect x="72.5" y="293.5" width="5" height="1" fill="#888"/>
<rect x="72.5" y="276.5" width="5" height="1" fill="#888"/>
<rect x="72.5" y="259.5" width="5" height="1" fill="#888"/>
<rect x="72.5" y="242.5" width="5" height="1" fill="#888"/>
<rect x="72.5" y="225.5" width="5" height="1" fill="#888"/>
<rect x="72.5" y="207.5" width="5" height="1" fill="#888"/>
</svg>
<div class="t" style="left:20px;width:52px;text-align:right;top:191.5px;font-size:12.3px;color:#1a1a1a">-33dB</div>
<div class="t" style="left:20px;width:52px;text-align:right;top:218.2px;font-size:12.3px;color:#444;opacity:0.75">-39dB</div>
<div class="t" style="left:20px;width:52px;text-align:right;top:220.7px;font-size:12.3px;color:#777;opacity:0.6">-39dB</div>
<div class="t" style="left:20px;width:52px;text-align:right;top:235.2px;font-size:12.3px;color:#444;opacity:0.75">-42dB</div>
<div class="t" style="left:20px;width:52px;text-align:right;top:237.7px;font-size:12.3px;color:#777;opacity:0.6">-42dB</div>
<div class="t" style="left:20px;width:52px;text-align:right;top:253.2px;font-size:12.3px;color:#444;opacity:0.75">-45dB</div>
<div class="t" style="left:20px;width:52px;text-align:right;top:254.7px;font-size:12.3px;color:#777;opacity:0.6">-45dB</div>
<div class="t" style="left:20px;width:52px;text-align:right;top:270.2px;font-size:12.3px;color:#444;opacity:0.75">-48dB</div>
<div class="t" style="left:20px;width:52px;text-align:right;top:271.7px;font-size:12.3px;color:#777;opacity:0.6">-48dB</div>
<div class="t" style="left:20px;width:52px;text-align:right;top:288.2px;font-size:12.3px;color:#444;opacity:0.75">-51dB</div>
<div class="t" style="left:20px;width:52px;text-align:right;top:288.7px;font-size:12.3px;color:#777;opacity:0.6">-51dB</div>
<div class="t" style="left:20px;width:52px;text-align:right;top:305.2px;font-size:12.3px;color:#444;opacity:0.75">-54dB</div>
<div class="t" style="left:20px;width:52px;text-align:right;top:305.7px;font-size:12.3px;color:#777;opacity:0.6">-54dB</div>
<div class="t" style="left:20px;width:52px;text-align:right;top:322.2px;font-size:12.3px;color:#1a1a1a">-57dB</div>
<div class="t" style="left:20px;width:52px;text-align:right;top:339.2px;font-size:12.3px;color:#444;opacity:0.75">-60dB</div>
<div class="t" style="left:20px;width:52px;text-align:right;top:340.7px;font-size:12.3px;color:#777;opacity:0.6">-60dB</div>
<div class="t" style="left:20px;width:52px;text-align:right;top:356.2px;font-size:12.3px;color:#444;opacity:0.75">-63dB</div>
<div class="t" style="left:20px;width:52px;text-align:right;top:357.7px;font-size:12.3px;color:#777;opacity:0.6">-63dB</div>
<div class="t" style="left:20px;width:52px;text-align:right;top:374.2px;font-size:12.3px;color:#1a1a1a">-66dB</div>
<div class="t" style="left:20px;width:52px;text-align:right;top:391.2px;font-size:12.3px;color:#1a1a1a">-69dB</div>
<div class="t" style="left:20px;width:52px;text-align:right;top:408.2px;font-size:12.3px;color:#1a1a1a">-72dB</div>
<div class="t" style="left:20px;width:52px;text-align:right;top:426.2px;font-size:12.3px;color:#1a1a1a">-75dB</div>
<div class="t" style="left:20px;width:52px;text-align:right;top:443.2px;font-size:12.3px;color:#1a1a1a">-78dB</div>
<div class="t" style="left:20px;width:52px;text-align:right;top:460.2px;font-size:12.3px;color:#1a1a1a">-81dB</div>
<div class="t" style="left:20px;width:52px;text-align:right;top:477.2px;font-size:12.3px;color:#1a1a1a">-84dB</div>
<div class="t" style="left:20px;width:52px;text-align:right;top:503.5px;font-size:12.3px;color:#1a1a1a">-90dB</div>
<div class="t" style="left:77.1px;width:100px;text-align:center;top:524px;font-size:12px;color:#222">2.00Hz</div>
<div class="t" style="left:126.9px;width:100px;text-align:center;top:524px;font-size:12px;color:#222">3.00Hz</div>
<div class="t" style="left:189.7px;width:100px;text-align:center;top:524px;font-size:12px;color:#222">5.00Hz</div>
<div class="t" style="left:274.8px;width:100px;text-align:center;top:524px;font-weight:bold;font-size:12px;color:#222">10.00Hz</div>
<div class="t" style="left:359.9px;width:100px;text-align:center;top:524px;font-size:12px;color:#222">20.00Hz</div>
<div class="t" style="left:445.1px;width:100px;text-align:center;top:524px;font-size:12px;color:#222">40.00Hz</div>
<div class="t" style="left:496.0px;width:100px;text-align:center;top:524px;font-size:10.5px;color:#222">61.00Hz</div>
<div class="t" style="left:557.6px;width:100px;text-align:center;top:524px;font-weight:bold;font-size:12px;color:#222">100.00Hz</div>
<div class="t" style="left:642.7px;width:100px;text-align:center;top:524px;font-size:12px;color:#222">200.00Hz</div>
<div class="t" style="left:727.9px;width:100px;text-align:center;top:524px;font-size:12px;color:#222">400.00Hz</div>
<div class="t" style="left:840.4px;width:100px;text-align:center;top:524px;font-weight:bold;font-size:12px;color:#222">1000.00Hz</div>
<div class="t" style="left:925.5px;width:100px;text-align:center;top:524px;font-size:12px;color:#222">2000.00Hz</div>
<div class="t" style="left:1010.7px;width:100px;text-align:center;top:524px;font-size:12px;color:#222">4000.00Hz</div>
<div class="t" style="left:1123.2px;width:100px;text-align:center;top:524px;font-weight:bold;font-size:12px;color:#222">10000.00Hz</div>
<div class="t" style="left:1190.0px;width:100px;text-align:center;top:524px;font-size:10.5px;color:#222">18000.00Hz</div>
<div class="a" style="left:1273px;top:205px;width:15px;height:296px;background:#cbcbc9"></div>
<svg style="left:1274px;top:193px" width="12" height="10"><path d="M2,7 L6,3 L10,7" stroke="#555" stroke-width="2" fill="none"/></svg>
<svg style="left:1274px;top:505px" width="12" height="10"><path d="M2,3 L6,7 L10,3" stroke="#555" stroke-width="2" fill="none"/></svg>
<svg style="left:1298px;top:187px" width="20" height="20"><circle cx="12" cy="7.5" r="5" fill="#fff" stroke="#222" stroke-width="1.4"/><path d="M9,8 H15 M12,5 V11" stroke="#b66" stroke-width="1.8"/><path d="M8.5,11 L2,17" stroke="#111" stroke-width="2.4"/></svg>
<svg style="left:1298px;top:501px" width="20" height="20"><circle cx="12" cy="7.5" r="5" fill="#fff" stroke="#222" stroke-width="1.4"/><path d="M9,8 H15" stroke="#b66" stroke-width="1.8"/><path d="M8.5,11 L2,17" stroke="#111" stroke-width="2.4"/></svg>
<div class="a" style="left:1304px;top:217px;width:4px;height:262px;background:#ebe3e3;border:1px solid #d6cccc"></div>
<svg style="left:1297px;top:478px" width="20" height="14"><polygon points="1,1 13,1 18,6.5 13,12 1,12" fill="#ededeb" stroke="#aaa" stroke-width="1"/></svg>
<div class="t" style="left:77px;top:555px;font-size:11.2px;color:#222">Cursor:</div>
<div class="a" style="left:115px;top:549px;width:537px;height:23px;border:1px solid #b4b4b4;background:#f2f2f0"></div>
<div class="t" style="left:121px;top:555px;font-size:12px;color:#a8a8b8;letter-spacing:-0.1px">8571 Hz (E7) = -45 dB</div>
<div class="t" style="left:121px;top:555px;font-size:12px;color:#222;opacity:0.7;letter-spacing:-0.4px">8575 Hz (E7) = -46 dB</div>
<div class="t" style="left:652px;top:555px;font-size:11px;color:#222">Peak:</div>
<div class="a" style="left:680px;top:549px;width:538px;height:23px;border:1px solid #b4b4b4;background:#f2f2f0"></div>
<div class="t" style="left:686px;top:555px;font-size:12px;color:#a8a8b8;letter-spacing:-0.1px">8571 Hz (E7) = -45.3 dB</div>
<div class="t" style="left:686px;top:555px;font-size:12px;color:#222;opacity:0.7;letter-spacing:-0.4px">8574 Hz (E7) = -46.5 dB</div>
<div class="a" style="left:1223px;top:554px;width:13px;height:13px;border:1px solid #333;background:#fff"></div>
<svg style="left:1224px;top:555px" width="12" height="12"><path d="M2,6 L5,9.5 L10,2" stroke="#111" stroke-width="1.8" fill="none"/></svg>
<div class="t" style="left:1239px;top:555px;font-size:12px;color:#222">Grids</div>
<div class="t" style="left:441px;top:586px;font-size:12px;color:#222">Algorithm:</div>
<div class="t" style="left:441px;top:616px;font-size:12px;color:#222">Function:</div>
<div class="t" style="left:677px;top:586px;font-size:12px;color:#222">Size:</div>
<div class="t" style="left:677px;top:616px;font-size:12px;color:#222">Axis:</div>
<div class="a" style="left:502px;top:579px;width:166px;height:26px;border:1px solid #acacac;background:linear-gradient(#f0f0f0,#e5e5e5)"></div>
<div class="t" style="left:506px;top:585px;font-size:12px;color:#111">Spectrum</div>
<svg style="left:654px;top:589px" width="10" height="8"><path d="M1,1 L5,5 L9,1" stroke="#333" stroke-width="1.4" fill="none"/></svg>
<div class="a" style="left:502px;top:609px;width:166px;height:26px;border:1px solid #acacac;background:linear-gradient(#f0f0f0,#e5e5e5)"></div>
<div class="t" style="left:506px;top:615px;font-size:12px;color:#111">Hann window</div>
<svg style="left:654px;top:619px" width="10" height="8"><path d="M1,1 L5,5 L9,1" stroke="#333" stroke-width="1.4" fill="none"/></svg>
<div class="a" style="left:705px;top:579px;width:116px;height:26px;border:1px solid #acacac;background:linear-gradient(#f0f0f0,#e5e5e5)"></div>
<div class="t" style="left:709px;top:585px;font-size:12px;color:#111">32768</div>
<svg style="left:807px;top:589px" width="10" height="8"><path d="M1,1 L5,5 L9,1" stroke="#333" stroke-width="1.4" fill="none"/></svg>
<div class="a" style="left:705px;top:609px;width:116px;height:26px;border:1px solid #acacac;background:linear-gradient(#f0f0f0,#e5e5e5)"></div>
<div class="t" style="left:709px;top:615px;font-size:12px;color:#111">Log frequency</div>
<svg style="left:807px;top:619px" width="10" height="8"><path d="M1,1 L5,5 L9,1" stroke="#333" stroke-width="1.4" fill="none"/></svg>
<div class="a" style="left:831px;top:580px;width:86px;height:24px;border:1px solid #adadad;background:#e5e5e5"></div>
<div class="t" style="left:831px;width:86px;text-align:center;top:587px;font-size:12px;color:#111">Export...</div>
<div class="a" style="left:831px;top:610px;width:86px;height:24px;border:1px solid #adadad;background:#e5e5e5"></div>
<div class="t" style="left:831px;width:86px;text-align:center;top:617px;font-size:12px;color:#111">Replot...</div>
<div class="a" style="left:1191px;top:646px;width:85px;height:24px;border:1px solid #adadad;background:#e5e5e5"></div>
<div class="t" style="left:1191px;width:85px;text-align:center;top:653px;font-size:12px;color:#111">Close</div>
<div class="a" style="left:1286px;top:645px;width:27px;height:27px;border:1px solid #adadad;background:#e8e8e6"></div>
<div class="a" style="left:1289px;top:648px;width:21px;height:21px;border-radius:50%;background:#e8a4c4"></div>
<div class="t" style="left:1289px;top:651px;width:21px;text-align:center;font-size:15px;color:#fff">?</div>
</body></html>
